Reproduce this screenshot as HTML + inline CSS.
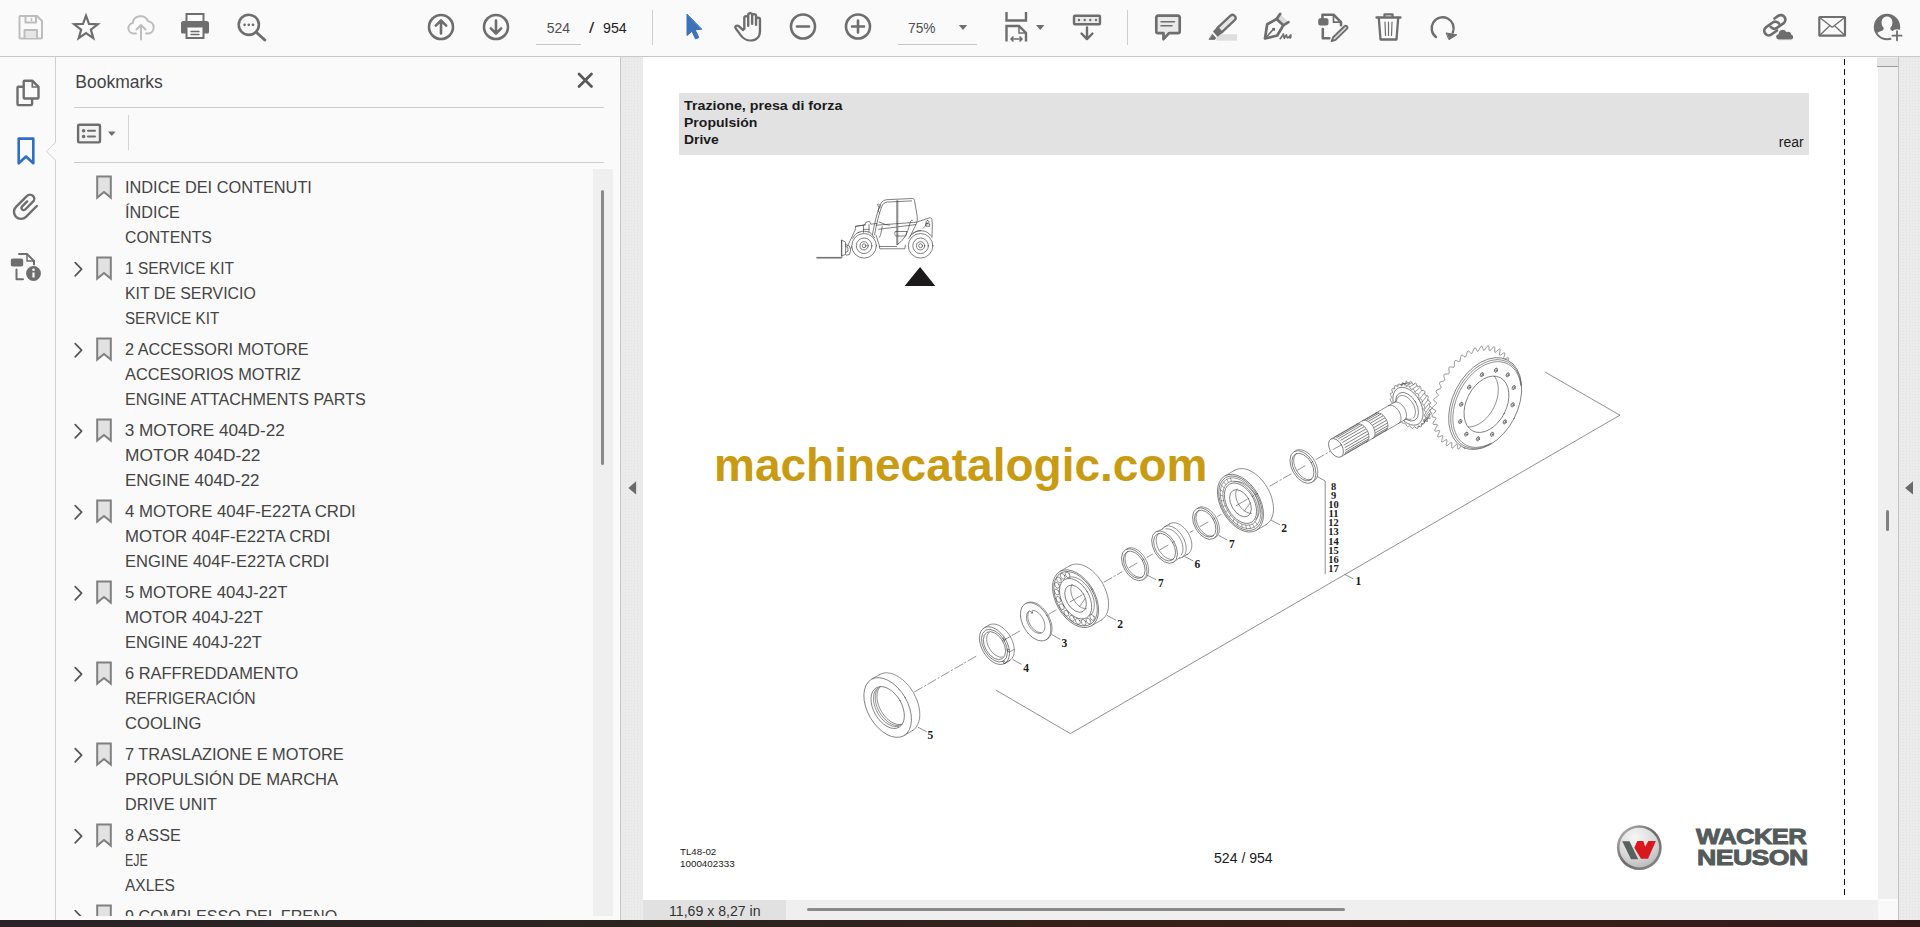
<!DOCTYPE html>
<html lang="en">
<head>
<meta charset="utf-8">
<title>Acrobat Reader</title>
<style>
html,body{margin:0;padding:0;}
body{width:1920px;height:927px;overflow:hidden;position:relative;background:#fafafa;font-family:"Liberation Sans",sans-serif;color:#3c3c3c;}
.abs{position:absolute;}
#toolbar{left:0;top:0;width:1920px;height:56px;background:#fafafa;border-bottom:1px solid #c9c9c9;}
#rail{left:0;top:57px;width:55px;height:863px;background:#fafafa;border-right:1px solid #d0d0d0;}
#panel{left:56px;top:57px;width:564px;height:863px;background:#fafafa;border-right:1px solid #c4c4c4;}
#gutterL{left:621px;top:57px;width:22px;height:863px;}
#page{left:643px;top:57px;width:1235px;height:843px;background:#fff;}
#vscroll{left:1878px;top:57px;width:20px;height:843px;background:#efefef;border-right:1px solid #c2c2c2;}
#gutterR{left:1899px;top:57px;width:21px;height:863px;}
#hscroll{left:643px;top:900px;width:1235px;height:20px;background:#efefef;}
#corner{left:1878px;top:899px;width:20px;height:21px;background:#f9f9f9;border-right:1px solid #c2c2c2;}
#taskbar{left:0;top:920px;width:1920px;height:7px;background:linear-gradient(90deg,#2b2228 0%,#2e241d 38%,#3a1f17 72%,#35191a 100%);}
.dots{background-color:#ebebeb;background-image:radial-gradient(circle,#e2e2e2 0.7px,transparent 1px);background-size:3px 3px;}
svg{position:absolute;overflow:visible;}
.tx{position:absolute;white-space:nowrap;transform-origin:0 0;line-height:1;}
</style>
</head>
<body>
<div id="toolbar" class="abs"></div>
<div id="rail" class="abs"></div>
<div id="panel" class="abs"></div>
<div id="gutterL" class="abs dots"></div>
<div id="page" class="abs"></div>
<div id="vscroll" class="abs"></div>
<div id="gutterR" class="abs dots"></div>
<div id="hscroll" class="abs"></div>
<div id="corner" class="abs"></div>
<div id="taskbar" class="abs"></div>
<svg class="abs" style="left:0;top:0" width="1920" height="56" viewBox="0 0 1920 56" fill="none" stroke-linecap="round" stroke-linejoin="round">
<!-- save (disabled) -->
<g stroke="#bdbdbd" stroke-width="2">
<path d="M20.5 16h16.5l5 5v16.5a1 1 0 0 1-1 1h-20.5a1 1 0 0 1-1-1v-20.500a1 1 0 0 1 1-1z"/>
<path d="M25.500 16v6.500h10.500v-6.500" />
<path d="M24.500 38v-8h12.500v8" fill="#e6e6e6"/>
<path d="M31.500 18.500v2" stroke-width="1.500"/>
</g>
<!-- star -->
<path d="M86.00 15.70L89.00 23.97L97.79 24.27L90.85 29.68L93.29 38.13L86.00 33.20L78.71 38.13L81.15 29.68L74.21 24.27L83.00 23.97z" stroke="#6e6e6e" stroke-width="2.200" stroke-linejoin="miter"/>
<!-- cloud upload (disabled) -->
<g stroke="#bdbdbd" stroke-width="2">
<path d="M136 33.500h-2.500a5.300 5.300 0 0 1-0.800-10.500a8 8 0 0 1 15.300-1.800a6.200 6.200 0 0 1 0.500 12.300h-2.500"/>
<path d="M141 39.500v-14M136.500 29.500l4.500-4.500 4.500 4.500"/>
</g>
<!-- printer -->
<g>
<path d="M186.500 21v-7h17v7" stroke="#6e6e6e" stroke-width="2" stroke-linejoin="miter"/>
<path d="M183.500 21h23a2.500 2.500 0 0 1 2.500 2.500v8.500a1.500 1.500 0 0 1-1.500 1.500h-3.500v-6h-18v6h-3.500a1.500 1.500 0 0 1-1.500-1.500v-8.500a2.500 2.500 0 0 1 2.500-2.500z" fill="#6e6e6e" stroke="none"/>
<path d="M186.500 28v10h17v-10" stroke="#6e6e6e" stroke-width="2" stroke-linejoin="miter"/>
<path d="M191 31.500h8M191 34.500h8" stroke="#6e6e6e" stroke-width="1.300"/>
</g>
<!-- search -->
<g stroke="#6e6e6e">
<circle cx="248.800" cy="24.800" r="10.100" stroke-width="2.600"/>
<path d="M256.500 32.500l8.300 7.500" stroke-width="3"/>
<path d="M244.600 24.800h0.010M248.800 24.800h0.010M253 24.800h0.010" stroke-width="2.700"/>
</g>
<!-- up / down -->
<g stroke="#6e6e6e" stroke-width="2.600">
<circle cx="441" cy="27" r="12"/>
<path d="M441 33.500v-12.500M435.800 25.700l5.200-5.200 5.200 5.200"/>
<circle cx="496" cy="27" r="12"/>
<path d="M496 20.500v12.500M490.800 28.300l5.200 5.200 5.200-5.200"/>
</g>
<!-- page num underline, separators -->
<path d="M536 44.500h45M898 44.500h79" stroke="#c6c6c6" stroke-width="1" stroke-linecap="butt"/>
<path d="M652.500 10v35M1127.500 10v35" stroke="#cfcfcf" stroke-width="1" stroke-linecap="butt"/>
<!-- select arrow (blue) -->
<path d="M687 14.500v21l5-4.200 3.600 7.700 3.200-1.500-3.600-7.600 6.300-0.700z" fill="#3b72b8" stroke="#3b72b8" stroke-width="1" stroke-linejoin="round"/>
<!-- hand -->
<g stroke="#6e6e6e" stroke-width="2.200" transform="translate(734.200 0) scale(1.087 1) translate(-734.200 0)">
<path d="M743.500 29v-11a1.800 1.800 0 0 1 3.600 0v8M747.100 24v-9a1.800 1.800 0 0 1 3.600 0v9M750.700 24v-8a1.800 1.800 0 0 1 3.600 0v9M754.300 25v-5.500a1.800 1.800 0 0 1 3.600 0v11.500c0 6-3.500 9.500-8.500 9.500s-7-2-9-5l-4.800-7.200c-1.200-2 1.200-3.600 2.800-2.200l4.100 4"/>
</g>
<!-- zoom out / in -->
<g stroke="#6e6e6e" stroke-width="2.600">
<circle cx="803" cy="26.500" r="12"/>
<path d="M797 26.500h12"/>
<circle cx="858" cy="26.500" r="12"/>
<path d="M852 26.500h12M858 20.500v12"/>
</g>
<!-- zoom dropdown arrows -->
<path d="M958.800 25h8.400l-4.200 5z M1036 25h8.400l-4.200 5z" fill="#6e6e6e" stroke="none"/>
<!-- fit width icon -->
<g stroke="#6e6e6e" stroke-width="2.400" stroke-linecap="butt" stroke-linejoin="miter">
<path d="M1006.500 12v8.500h19.500v-8.500"/>
<path d="M1006.500 41.500v-15.500h12.500l7 7v8.500"/>
<path d="M1019 26v7h7" stroke-width="1.500"/>
<path d="M1011 39h11M1013.500 36.500l-2.500 2.500 2.500 2.500M1019.500 36.500l2.500 2.500-2.500 2.500" stroke-width="1.500"/>
</g>
<!-- scroll mode icon -->
<g stroke="#6e6e6e" stroke-width="2.400">
<rect x="1074" y="15.700" width="26" height="8.600" rx="1" fill="#ececec"/>
<path d="M1079 20h0.010M1084.700 20h0.010M1090.300 20h0.010M1096 20h0.010" stroke-width="2.400"/>
<path d="M1087 27.500v11.500M1081.500 33.500l5.500 5.700 5.500-5.700"/>
</g>
<!-- comment -->
<g stroke="#6e6e6e" stroke-width="2.700">
<path d="M1158 15.700h20a1.700 1.700 0 0 1 1.700 1.700v14.100a1.700 1.700 0 0 1-1.700 1.700h-9l-5.500 6v-6h-5.500a1.700 1.700 0 0 1-1.700-1.700v-14.100a1.700 1.700 0 0 1 1.700-1.700z" fill="#e9e9e9"/>
<path d="M1161 21.800h13.500M1161 25.800h11" stroke-width="1.500"/>
</g>
<!-- highlighter -->
<g>
<rect x="1216.500" y="34.200" width="20.500" height="6.500" fill="#dedede" stroke="none"/>
<g transform="translate(0 -1.300)"><path d="M1230.500 17l-13 12.200 4.200 4.500 13-12.200a3.080 3.080 0 0 0-4.200-4.500z" fill="#e6e6e6" stroke="#6e6e6e" stroke-width="2.300" stroke-linejoin="round"/>
<path d="M1217.500 29.200l4.200 4.500-3.900 3.300-3.900-4.200z" fill="#6e6e6e" stroke="#6e6e6e" stroke-width="1.600" stroke-linejoin="round"/></g>
<path d="M1212.500 34.500l3.300 3.600-1 1.300h-5.500z" fill="#6e6e6e" stroke="#6e6e6e" stroke-width="0.800" stroke-linejoin="round"/>
</g>
<!-- sign pen -->
<g stroke="#6e6e6e" stroke-width="2.700" stroke-linejoin="round" stroke-linecap="round">
<path d="M1276.600 19l3.600-5.100 8.300 8.300-5.200 3.100z" fill="#dcdcdc" stroke="none"/>
<path d="M1265 38.500l2.200-14.200 9.400-5.300 6.700 6.300-6 10.200z" fill="#fafafa"/>
<path d="M1276.600 19l3.600-5.100M1283.300 25.300l5.200-3.100"/>
<path d="M1265.300 38.200l7.600-8.500" stroke-width="1.600"/>
<rect x="1272.200" y="27.900" width="2.800" height="2.800" fill="#6e6e6e" stroke="none"/>
<path d="M1280.200 38.600c1-1 2.300-2.800 3.100-4.600c0.500 1.600 0.700 3 1 4.400c0.800-1.500 1.400-2.700 2.100-3.500c0.300 1.200 0.500 2.200 1 3c1-0.300 2.200-1.400 3.400-2.900c0.200 1.300 0.100 2.200-0.600 3.100" stroke-width="1.700" fill="none"/>
</g>
<!-- edit pdf -->
<g stroke="#6e6e6e" stroke-width="2.600">
<path d="M1322.500 19v-4.300h11l7.500 7.500v3"/>
<path d="M1333.500 15.500v6.700h6.700" stroke-width="1.700"/>
<rect x="1319.200" y="19.200" width="8.300" height="5.400" rx="1" fill="#6e6e6e" stroke-width="2"/>
<path d="M1322.800 29v9.200h6.500"/>
<path d="M1344.500 26.300l-11.300 11-1.600 3.800 3.900-1.200 11.300-11a1.650 1.650 0 0 0-2.300-2.600z" fill="#dcdcdc" stroke-width="1.900"/>
</g>
<!-- trash -->
<g stroke="#6e6e6e" stroke-width="2.300">
<path d="M1376.500 17.500h24"/>
<path d="M1384.500 17v-2.700h8v2.700"/>
<path d="M1378.800 18l1.700 21.500h16l1.700-21.500"/>
<path d="M1385 22l0.500 13.500M1388.500 22v13.500M1392 22l-0.500 13.500" stroke-width="1.200"/>
</g>
<!-- rotate -->
<g>
<path d="M1436 37a11 11 0 1 1 16.800-4.500" stroke="#6e6e6e" stroke-width="2.400"/>
<path d="M1446.500 33l10.300 1.800-7.500 4.700z" fill="#6e6e6e" stroke="#6e6e6e" stroke-width="1"/>
</g>
<!-- link + cloud -->
<g>
<g stroke="#6e6e6e" stroke-width="2.700">
<path d="M1774.500 18.500l3.700-2.600a4.500 4.500 0 0 1 5.200 7.400l-6.500 4.600a4.500 4.500 0 0 1-6.300-1.100"/>
<path d="M1777 30.500l-5.600 4a4.500 4.500 0 0 1-5.200-7.400l6.500-4.600a4.500 4.500 0 0 1 6.300 1.100"/>
</g>
<path d="M1778.500 40.200a3.300 3.300 0 0 1-0.400-6.500a4.600 4.600 0 0 1 8.600-2.200a3.400 3.400 0 0 1 5 2.700a3.100 3.100 0 0 1-0.700 6z" fill="#6e6e6e" stroke="#fafafa" stroke-width="1.200"/>
</g>
<!-- mail -->
<g stroke="#6e6e6e">
<rect x="1819.300" y="17" width="25.700" height="18.700" rx="0.500" stroke-width="2.200"/>
<path d="M1820 17.700l12.200 9.600 12.200-9.600M1820 35l9.500-9M1844.400 35l-9.500-9" stroke-width="1.300"/>
</g>
<!-- user + -->
<g>
<clipPath id="ucl"><circle cx="1887" cy="27" r="11.200"/></clipPath>
<circle cx="1887" cy="27" r="13.200" fill="#6e6e6e" stroke="none"/>
<g clip-path="url(#ucl)">
<path d="M1887 16.600c3.300 0 5.400 2.500 5.400 5.900c0 2.400-0.900 4.400-2.200 5.600c0 1.600 0.600 2.200 2.500 3c3.600 1.300 6.300 2.500 6.800 5.400v6h-25v-6c0.500-2.900 3.200-4.100 6.800-5.400c1.900-0.800 2.500-1.400 2.500-3c-1.300-1.200-2.200-3.200-2.200-5.600c0-3.400 2.100-5.900 5.400-5.900z" fill="#fafafa" stroke="none"/>
</g>
<circle cx="1897" cy="35.800" r="6.600" fill="#fafafa" stroke="none"/>
<path d="M1892.400 35.700h9.200M1897 31.100v9.200" stroke="#6e6e6e" stroke-width="1.800"/>
</g>
</svg>

<svg class="abs" style="left:0;top:57px" width="640" height="120" viewBox="0 57 640 120" fill="none" stroke-linecap="round" stroke-linejoin="round">
<!-- notch pointing to active item -->
<path d="M55.500 143.200v16.600" stroke="#fafafa" stroke-width="1.800" stroke-linecap="butt"/>
<path d="M55.600 142.300l-9 9 9 9" fill="#fafafa" stroke="#d0d0d0" stroke-width="1" stroke-linecap="butt"/>
<!-- pages icon -->
<g stroke="#6e6e6e" stroke-width="2.400">
<path d="M22.300 86.700h-3.800a1 1 0 0 0-1 1v16.400a1 1 0 0 0 1 1h12.600a1 1 0 0 0 1-1v-4.300"/>
<path d="M24.700 80.800h7.800l6 6v10.700a1 1 0 0 1-1 1h-12.800a1 1 0 0 1-1-1v-15.700a1 1 0 0 1 1-1z" fill="#fafafa"/>
<path d="M32.300 81.500v5.500h5.500" stroke-width="1.700"/>
</g>
<!-- bookmark (active, blue) -->
<path d="M18.700 138.600h14.600v24.700l-7.300-6.800-7.300 6.800z" stroke="#2d6fc8" stroke-width="2.600" stroke-linejoin="round"/>
<!-- options icon -->
<g stroke="#6e6e6e">
<rect x="78.100" y="124.700" width="21.900" height="17.700" rx="1.200" stroke-width="2.400" fill="#f2f2f2"/>
<path d="M83.600 130.800h0.010M83.600 136.500h0.010" stroke-width="3.600"/>
<path d="M88 130.800h7M88 136.500h7" stroke-width="2.100" stroke-linecap="round"/>
</g>
<path d="M108 131.500h7.600l-3.800 4.500z" fill="#6e6e6e" stroke="none"/>
<path d="M128.500 115v35" stroke="#d4d4d4" stroke-width="1" stroke-linecap="butt"/>
<!-- header dividers -->
<path d="M74 107.500h530M74 162.500h530" stroke="#cdcdcd" stroke-width="1" stroke-linecap="butt"/>
<!-- close X -->
<path d="M579 74l12.500 12.500M591.500 74l-12.500 12.500" stroke="#5a5a5a" stroke-width="2.800"/>
</svg>
<svg class="abs" style="left:0;top:180px" width="56" height="120" viewBox="0 180 56 120" fill="none" stroke-linecap="round" stroke-linejoin="round">
<!-- paperclip -->
<path d="M36.830 205.980L25.980 216.830A7.040 7.040 0 0 1 16.020 206.870L27.090 195.800A4.170 4.170 0 0 1 32.990 201.700L25.210 209.480A2.145 2.145 0 0 1 22.180 206.440L27.170 201.450" stroke="#6e6e6e" stroke-width="2.400"/>
<!-- doc info -->
<g stroke="#6e6e6e" stroke-width="2">
<path d="M19 254h8l7 7v3.500"/>
<path d="M27 254v7h7" stroke-width="1.500"/>
<rect x="11.800" y="259.500" width="10.400" height="6" rx="1" fill="#6e6e6e"/>
<path d="M16.500 269.500v9.700h6.500"/>
</g>
<circle cx="33.500" cy="273.500" r="7.400" fill="#6e6e6e"/>
<path d="M33.500 272.500v5" stroke="#fafafa" stroke-width="2.200" stroke-linecap="butt"/>
<circle cx="33.500" cy="269.700" r="1.300" fill="#fafafa"/>
</svg>

<div class="abs" style="left:56px;top:170px;width:537px;height:746px;overflow:hidden"><div class="abs" style="left:-56px;top:-170px;width:600px;height:927px"><div class="tx" style="left:124.70px;top:179.04px;font-size:17.2px;color:#444;transform:scaleX(0.9501);">INDICE DEI CONTENUTI</div>
<div class="tx" style="left:124.70px;top:204.04px;font-size:17.2px;color:#444;transform:scaleX(0.9422);">ÍNDICE</div>
<div class="tx" style="left:124.70px;top:229.04px;font-size:17.2px;color:#444;transform:scaleX(0.9182);">CONTENTS</div>
<div class="tx" style="left:124.70px;top:260.04px;font-size:17.2px;color:#444;transform:scaleX(0.9000);">1 SERVICE KIT</div>
<div class="tx" style="left:124.70px;top:285.04px;font-size:17.2px;color:#444;transform:scaleX(0.9232);">KIT DE SERVICIO</div>
<div class="tx" style="left:124.70px;top:310.04px;font-size:17.2px;color:#444;transform:scaleX(0.8831);">SERVICE KIT</div>
<div class="tx" style="left:124.70px;top:341.04px;font-size:17.2px;color:#444;transform:scaleX(0.9433);">2 ACCESSORI MOTORE</div>
<div class="tx" style="left:124.70px;top:366.04px;font-size:17.2px;color:#444;transform:scaleX(0.9489);">ACCESORIOS MOTRIZ</div>
<div class="tx" style="left:124.70px;top:391.04px;font-size:17.2px;color:#444;transform:scaleX(0.9381);">ENGINE ATTACHMENTS PARTS</div>
<div class="tx" style="left:124.70px;top:422.04px;font-size:17.2px;color:#444;">3 MOTORE 404D-22</div>
<div class="tx" style="left:124.70px;top:447.04px;font-size:17.2px;color:#444;transform:scaleX(1.0084);">MOTOR 404D-22</div>
<div class="tx" style="left:124.70px;top:472.04px;font-size:17.2px;color:#444;transform:scaleX(0.9846);">ENGINE 404D-22</div>
<div class="tx" style="left:124.70px;top:503.04px;font-size:17.2px;color:#444;transform:scaleX(0.9766);">4 MOTORE 404F-E22TA CRDI</div>
<div class="tx" style="left:124.70px;top:528.04px;font-size:17.2px;color:#444;transform:scaleX(0.9756);">MOTOR 404F-E22TA CRDI</div>
<div class="tx" style="left:124.70px;top:553.04px;font-size:17.2px;color:#444;transform:scaleX(0.9610);">ENGINE 404F-E22TA CRDI</div>
<div class="tx" style="left:124.70px;top:584.04px;font-size:17.2px;color:#444;transform:scaleX(0.9740);">5 MOTORE 404J-22T</div>
<div class="tx" style="left:124.70px;top:609.04px;font-size:17.2px;color:#444;transform:scaleX(0.9784);">MOTOR 404J-22T</div>
<div class="tx" style="left:124.70px;top:634.04px;font-size:17.2px;color:#444;transform:scaleX(0.9554);">ENGINE 404J-22T</div>
<div class="tx" style="left:124.70px;top:665.04px;font-size:17.2px;color:#444;transform:scaleX(0.9562);">6 RAFFREDDAMENTO</div>
<div class="tx" style="left:124.70px;top:690.04px;font-size:17.2px;color:#444;transform:scaleX(0.9124);">REFRIGERACIÓN</div>
<div class="tx" style="left:124.70px;top:715.04px;font-size:17.2px;color:#444;transform:scaleX(0.9651);">COOLING</div>
<div class="tx" style="left:124.70px;top:746.04px;font-size:17.2px;color:#444;transform:scaleX(0.9527);">7 TRASLAZIONE E MOTORE</div>
<div class="tx" style="left:124.70px;top:771.04px;font-size:17.2px;color:#444;transform:scaleX(0.9664);">PROPULSIÓN DE MARCHA</div>
<div class="tx" style="left:124.70px;top:796.04px;font-size:17.2px;color:#444;transform:scaleX(0.9424);">DRIVE UNIT</div>
<div class="tx" style="left:124.70px;top:827.04px;font-size:17.2px;color:#444;transform:scaleX(0.9401);">8 ASSE</div>
<div class="tx" style="left:124.70px;top:852.04px;font-size:17.2px;color:#444;transform:scaleX(0.7263);">EJE</div>
<div class="tx" style="left:124.70px;top:877.04px;font-size:17.2px;color:#444;transform:scaleX(0.9004);">AXLES</div>
<div class="tx" style="left:124.70px;top:908.04px;font-size:17.2px;color:#444;transform:scaleX(0.9409);">9 COMPLESSO DEL FRENO</div>
<svg class="abs" style="left:56px;top:170px" width="540" height="746" viewBox="56 170 540 746" fill="none">
<path d="M97.200 176.6h13.600v21l-6.800-5.600-6.800 5.600z" fill="#e2e2e2" stroke="#808080" stroke-width="2" stroke-linejoin="miter"/>
<path d="M97.200 257.6h13.600v21l-6.800-5.600-6.800 5.600z" fill="#e2e2e2" stroke="#808080" stroke-width="2" stroke-linejoin="miter"/>
<path d="M75.200 262.6l6.400 6.600-6.400 6.600" stroke="#555" stroke-width="1.700" stroke-linecap="round" stroke-linejoin="round"/>
<path d="M97.200 338.6h13.600v21l-6.800-5.600-6.800 5.600z" fill="#e2e2e2" stroke="#808080" stroke-width="2" stroke-linejoin="miter"/>
<path d="M75.200 343.6l6.400 6.600-6.400 6.600" stroke="#555" stroke-width="1.700" stroke-linecap="round" stroke-linejoin="round"/>
<path d="M97.200 419.6h13.600v21l-6.800-5.600-6.800 5.600z" fill="#e2e2e2" stroke="#808080" stroke-width="2" stroke-linejoin="miter"/>
<path d="M75.200 424.6l6.400 6.600-6.400 6.600" stroke="#555" stroke-width="1.700" stroke-linecap="round" stroke-linejoin="round"/>
<path d="M97.200 500.6h13.600v21l-6.800-5.600-6.800 5.600z" fill="#e2e2e2" stroke="#808080" stroke-width="2" stroke-linejoin="miter"/>
<path d="M75.200 505.6l6.400 6.600-6.400 6.600" stroke="#555" stroke-width="1.700" stroke-linecap="round" stroke-linejoin="round"/>
<path d="M97.200 581.6h13.600v21l-6.800-5.600-6.800 5.600z" fill="#e2e2e2" stroke="#808080" stroke-width="2" stroke-linejoin="miter"/>
<path d="M75.200 586.6l6.400 6.600-6.400 6.600" stroke="#555" stroke-width="1.700" stroke-linecap="round" stroke-linejoin="round"/>
<path d="M97.200 662.6h13.600v21l-6.800-5.600-6.800 5.600z" fill="#e2e2e2" stroke="#808080" stroke-width="2" stroke-linejoin="miter"/>
<path d="M75.200 667.6l6.400 6.600-6.400 6.600" stroke="#555" stroke-width="1.700" stroke-linecap="round" stroke-linejoin="round"/>
<path d="M97.200 743.6h13.600v21l-6.800-5.600-6.800 5.600z" fill="#e2e2e2" stroke="#808080" stroke-width="2" stroke-linejoin="miter"/>
<path d="M75.200 748.6l6.400 6.600-6.400 6.600" stroke="#555" stroke-width="1.700" stroke-linecap="round" stroke-linejoin="round"/>
<path d="M97.200 824.6h13.600v21l-6.800-5.600-6.800 5.600z" fill="#e2e2e2" stroke="#808080" stroke-width="2" stroke-linejoin="miter"/>
<path d="M75.200 829.6l6.400 6.600-6.400 6.600" stroke="#555" stroke-width="1.700" stroke-linecap="round" stroke-linejoin="round"/>
<path d="M97.200 905.6h13.600v21l-6.800-5.600-6.800 5.600z" fill="#e2e2e2" stroke="#808080" stroke-width="2" stroke-linejoin="miter"/>
<path d="M75.200 910.6l6.400 6.600-6.400 6.600" stroke="#555" stroke-width="1.700" stroke-linecap="round" stroke-linejoin="round"/>
</svg></div></div>
<div class="abs" style="left:593px;top:169px;width:20px;height:747px;background:#efefef"></div>
<div class="abs" style="left:601px;top:190px;width:3px;height:275px;background:#8a8a8a;border-radius:1.500px"></div>
<div class="abs" style="left:679px;top:93px;width:1130px;height:61.500px;background:#e2e2e2"></div>
<svg class="abs" style="left:643px;top:57px" width="1235" height="843" viewBox="643 57 1235 843" fill="none">
<path d="M1844.500 59v836" stroke="#111" stroke-width="1" stroke-dasharray="6 4"/>
<!-- triangle marker -->
<path d="M920.100 267l15.200 18.900h-30.700z" fill="#1c1a1b"/>
<!-- telehandler pictogram -->
<g stroke="#3a3a3a" stroke-width="0.650" stroke-linecap="round" stroke-linejoin="round">
<path d="M816.800 257.400h24.200l0.800-0.600v-16.600M816.800 258.100h24.600l1-0.800"/>
<path d="M841.800 240.200l3.800 2v12.400l-3.800 1z"/>
<path d="M845.600 244.500l3.800 1.500 1.200 3.800-1 4.700-3.200 0.600M845.600 246.300l2.300 1.500v3.500l-2.300 1"/>
<path d="M847.300 246.400l7.900-16.400 0.500-3.800 10-1.400M850.800 248.500l3.200-6.300"/>
<path d="M855.700 226.400l8.800-1.300 1.600-3 3.400-0.700 1.300 2.800 6.200-0.800"/>
<path d="M863.400 225.300v7.100M869 224.500v7.500M863.400 229.300h5.600"/>
<path d="M858 232.700c3.500-2 9.500-2 13 0.600l3.600 4.600M852.600 238.400c1.700-3.500 4-5.300 6.600-6.400"/>
<circle cx="864.100" cy="245.800" r="12.300" fill="#fff"/>
<circle cx="864.100" cy="245.800" r="7.800"/>
<circle cx="864.100" cy="245.800" r="4.100"/>
<circle cx="864.100" cy="245.800" r="1.900"/>
<path d="M872.500 234.400c1.800-10 5-24 8.200-30.500 1.300-2.500 3-3.800 6-4.200l25.600-1.200c1.300 0 1.900 0.700 2.200 2l2.600 15c0.500 3.500 0.200 6.500-1.200 9.300l-5.800 11.600"/>
<path d="M874.600 234.800c1.600-9.500 4.600-22.500 7.600-29 1-2.300 2.300-3.300 4.800-3.700l24.600-1.200"/>
<path d="M896.800 200.700v44M897.800 200.700v44"/>
<path d="M876.300 225.200l40.300-3 12.600-4.300c1.700-0.500 2.600 0.300 2.800 1.800l0.300 4.800-0.300 12.800"/>
<path d="M878.600 229.300l17.800-2.200M898.200 226.800l17.600-2.200"/>
<path d="M879 222l6.500 2.500 3.800 0.600M882.200 226.500l-1.500 8 -1.200 2.700"/>
<path d="M876 235.200l3.200 9.800 0.600 3.800h25l0.500-3.600M879.600 246.500h17.200"/>
<path d="M897.500 244.200c5-2.800 9-8.500 11.200-16.500l1.800-6.200c0.500-1.200 1.300-1.600 2-1.200"/>
<path d="M895.500 231.500h11.500l-1.300 4.500h-9.200c-1.300 0-1.700-0.700-1.700-2.200z"/>
<path d="M908.800 238.500c2.500-5.300 7-7.800 12-7.800 4.600 0 8.300 2 10.600 5.500M912.600 233.800c2.600-2.200 5.400-3.100 8.200-3.100"/>
<path d="M923.200 228.200l2.200-2.200 0.300-2.700 1.800-0.300M926.500 226.200h3.200v-2.400h-3.200zM927.500 220.400a1.500 1.500 0 1 0 0.010 0"/>
<path d="M877.500 204.500l1.500 3-0.800 3.600 1.500 1.800M878.500 203.800l1.800 1.800-0.500 2.300"/>
<circle cx="920.600" cy="245.800" r="12.300" fill="#fff"/>
<circle cx="920.600" cy="245.800" r="7.800"/>
<circle cx="920.600" cy="245.800" r="4.100"/>
<circle cx="920.600" cy="245.800" r="1.900"/>
</g>
<!-- WACKER NEUSON emblem -->
<defs>
<radialGradient id="wg" cx="0.400" cy="0.250" r="0.800"><stop offset="0" stop-color="#f6f6f6"/><stop offset="0.600" stop-color="#d9d9d9"/><stop offset="1" stop-color="#b4b4b4"/></radialGradient>
<linearGradient id="wr" x1="0" y1="0" x2="1" y2="1"><stop offset="0" stop-color="#b8b8b8"/><stop offset="0.500" stop-color="#6a6a6a"/><stop offset="1" stop-color="#8a8a8a"/></linearGradient>
</defs>
<circle cx="1639.300" cy="847.600" r="21.100" fill="url(#wg)" stroke="url(#wr)" stroke-width="2.600"/>
<path d="M1622.200 841.200h7.300l8.700 18.100h-7.200z" fill="#596060"/>
<path d="M1637.300 841h6.100l1.800 5.700 3.100-5.700h7.600l-7.800 17.700h-7.100l-6.700-10.900z" fill="#d8181c"/>
</svg>

<div class="tx" style="left:684.00px;top:99.41px;font-size:13.1px;color:#1a1a1a;font-weight:bold;transform:scaleX(1.0884);">Trazione, presa di forza</div>
<div class="tx" style="left:684.00px;top:116.01px;font-size:13.1px;color:#1a1a1a;font-weight:bold;transform:scaleX(1.0718);">Propulsión</div>
<div class="tx" style="left:684.00px;top:132.61px;font-size:13.1px;color:#1a1a1a;font-weight:bold;transform:scaleX(1.0606);">Drive</div>
<div class="tx" style="left:1778.80px;top:134.95px;font-size:14px;color:#1a1a1a;">rear</div>
<div class="tx" style="left:679.90px;top:847.93px;font-size:9.3px;color:#1a1a1a;transform:scaleX(1.0450);">TL48-02</div>
<div class="tx" style="left:680.20px;top:860.03px;font-size:9.3px;color:#1a1a1a;transform:scaleX(1.0557);">1000402333</div>
<div class="tx" style="left:1214.10px;top:851.15px;font-size:14px;color:#1a1a1a;transform:scaleX(1.0053);">524 / 954</div>
<div class="tx" style="left:713.60px;top:442.65px;font-size:45.3px;color:#c99b13;font-weight:bold;transform:scaleX(1.0155);">machinecatalogic.com</div>
<div class="tx" style="left:1695.80px;top:826.33px;font-size:21.7px;color:#535b5b;font-weight:bold;-webkit-text-stroke:0.9px #535b5b;letter-spacing:-0.5px;transform:scaleX(1.1800);">WACKER</div>
<div class="tx" style="left:1697.30px;top:846.73px;font-size:21.7px;color:#535b5b;font-weight:bold;-webkit-text-stroke:0.9px #535b5b;letter-spacing:-0.5px;transform:scaleX(1.2317);">NEUSON</div>
<svg class="abs" style="left:643px;top:57px" width="1235" height="843" viewBox="643 57 1235 843" fill="none" stroke="#4a4a4a" stroke-width="0.620" stroke-linecap="round" stroke-linejoin="round">
<path d="M912.2 730.8 L914.3 729.3 L916.2 727.2 L917.6 724.8 L918.7 722.0 L919.5 718.9 L919.8 715.4 L919.7 711.8 L919.2 708.0 L918.3 704.1 L917.0 700.2 L915.3 696.4 L913.4 692.6 L911.1 689.0 L908.6 685.7 L905.8 682.6 L902.9 679.9 L899.8 677.6 L896.7 675.7 L893.6 674.2 L890.5 673.3 L887.5 672.8 L884.7 672.9 L882.1 673.5 L879.6 674.6"/>
<path d="M904.0 735.6L912.2 730.8"/>
<path d="M871.4 679.3L879.6 674.6"/>
<ellipse cx="887.7" cy="707.5" rx="20.1" ry="32.5" transform="rotate(-30.07 887.7 707.5)" fill="#fff"/>
<ellipse cx="887.7" cy="707.5" rx="14.1" ry="22.8" transform="rotate(-30.07 887.7 707.5)"/>
<path d="M898.6 726.2 L896.7 726.6 L894.6 726.5 L892.3 726.0 L890.1 725.1 L887.8 723.9 L885.5 722.3 L883.4 720.4 L881.3 718.2 L879.5 715.8 L877.8 713.2 L876.4 710.4 L875.2 707.6 L874.3 704.7 L873.7 701.9 L873.5 699.2 L873.5 696.6 L873.9 694.2 L874.6 692.0 L875.6 690.2 L876.9 688.6"/>
<path d="M900.4 725.2 L898.4 725.6 L896.3 725.5 L894.1 725.0 L891.8 724.1 L889.5 722.9 L887.3 721.3 L885.1 719.4 L883.1 717.2 L881.2 714.8 L879.5 712.2 L878.1 709.4 L876.9 706.6 L876.0 703.7 L875.5 700.9 L875.2 698.2 L875.3 695.6 L875.6 693.2 L876.3 691.0 L877.3 689.2 L878.6 687.6"/>
<path d="M902.1 724.2 L900.1 724.6 L898.0 724.5 L895.8 724.0 L893.5 723.1 L891.2 721.9 L889.0 720.3 L886.8 718.4 L884.8 716.2 L882.9 713.8 L881.3 711.2 L879.8 708.4 L878.7 705.6 L877.8 702.7 L877.2 699.9 L876.9 697.2 L877.0 694.6 L877.4 692.2 L878.1 690.0 L879.1 688.2 L880.3 686.6"/>
<path d="M1009.5 660.6 L1010.9 659.6 L1012.0 658.3 L1013.0 656.8 L1013.7 655.0 L1014.1 653.1 L1014.3 650.9 L1014.2 648.6 L1013.9 646.2 L1013.4 643.8 L1012.5 641.3 L1011.5 638.9 L1010.3 636.5 L1008.8 634.2 L1007.2 632.1 L1005.5 630.2 L1003.6 628.5 L1001.7 627.0 L999.8 625.8 L997.8 624.9 L995.9 624.3 L994.0 624.0 L992.2 624.1 L990.5 624.4 L989.0 625.1"/>
<path d="M1004.8 663.4L1009.5 660.6"/>
<path d="M984.2 627.9L989.0 625.1"/>
<ellipse cx="994.5" cy="645.6" rx="12.7" ry="20.5" transform="rotate(-30.07 994.5 645.6)" fill="#fff"/>
<ellipse cx="994.5" cy="645.6" rx="11.0" ry="17.8" transform="rotate(-30.07 994.5 645.6)"/>
<ellipse cx="994.5" cy="645.6" rx="9.4" ry="15.2" transform="rotate(-30.07 994.5 645.6)"/>
<path d="M1002.9 656.9 L1001.3 657.2 L999.6 657.0 L997.8 656.4 L995.9 655.4 L994.1 654.1 L992.4 652.5 L990.8 650.6 L989.5 648.5 L988.3 646.3 L987.5 644.0 L986.9 641.7 L986.7 639.5 L986.8 637.4 L987.2 635.5 L987.9 633.9 L988.9 632.7"/>
<path d="M1009.5 652.0L1007.5 651.2"/>
<path d="M1014.3 649.3L1009.5 652.0"/>
<path d="M1009.3 649.8L1007.4 649.3"/>
<path d="M1007.5 651.2L1007.4 649.3"/>
<path d="M1005.5 639.2L1004.1 640.1"/>
<path d="M1010.3 636.5L1005.5 639.2"/>
<path d="M1004.2 637.2L1002.9 638.3"/>
<path d="M1004.1 640.1L1002.9 638.3"/>
<path d="M1004.1 663.7L1002.8 661.3"/>
<path d="M1008.8 661.0L1004.1 663.7"/>
<path d="M1005.4 663.0L1003.9 660.7"/>
<path d="M1002.8 661.3L1003.9 660.7"/>
<path d="M1046.0 639.7 L1047.6 638.9 L1049.0 637.7 L1050.1 636.2 L1051.0 634.5 L1051.6 632.4 L1052.0 630.2 L1052.0 627.7 L1051.7 625.2 L1051.2 622.6 L1050.3 619.9 L1049.2 617.3 L1047.9 614.7 L1046.3 612.3 L1044.6 610.0 L1042.7 608.0 L1040.7 606.2 L1038.6 604.7 L1036.5 603.5 L1034.4 602.6 L1032.3 602.2 L1030.3 602.0 L1028.5 602.3 L1026.8 602.9 L1025.3 603.9"/>
<ellipse cx="1035.7" cy="621.8" rx="12.9" ry="20.8" transform="rotate(-30.07 1035.7 621.8)" fill="#fff"/>
<path d="M1029.0 611.1 L1028.1 611.9 L1027.4 612.9 L1026.9 614.0 L1026.6 615.4 L1026.5 616.8 L1026.5 618.4 L1026.7 620.0 L1027.2 621.7 L1027.8 623.4 L1028.6 625.0 L1029.5 626.6 L1030.5 628.0 L1031.7 629.4 L1032.9 630.5 L1034.2 631.5 L1035.6 632.3 L1036.9 632.9 L1038.2 633.2 L1039.5 633.3 L1040.6 633.2 L1041.7 632.8 L1042.7 632.2 L1043.5 631.4 L1044.1 630.3 L1044.6 629.1 L1044.9 627.8 L1044.9 626.3 L1044.8 624.7 L1044.6 623.1 L1044.1 621.4 L1043.4 619.7 L1042.6 618.1 L1041.6 616.6 L1040.6 615.1 L1039.4 613.8 L1038.1 612.7 L1036.8 611.7 L1035.5 611.0 L1034.1 610.5 L1032.8 610.2 L1031.5 613.3 L1032.5 613.0Z"/>
<path d="M1040.9 632.6 L1039.4 632.5 L1037.7 632.0 L1036.1 631.1 L1034.4 630.0 L1032.9 628.5 L1031.5 626.8 L1030.2 624.9 L1029.2 622.9 L1028.5 620.8 L1028.0 618.8 L1027.8 616.8 L1027.8 614.9 L1028.2 613.3 L1028.9 611.8"/>
<path d="M1101.3 620.1 L1103.3 618.6 L1105.1 616.6 L1106.5 614.3 L1107.6 611.6 L1108.3 608.5 L1108.6 605.2 L1108.5 601.7 L1108.0 598.0 L1107.1 594.3 L1105.9 590.5 L1104.3 586.8 L1102.4 583.1 L1100.2 579.7 L1097.8 576.4 L1095.1 573.5 L1092.3 570.9 L1089.3 568.6 L1086.3 566.8 L1083.3 565.4 L1080.4 564.5 L1077.5 564.1 L1074.7 564.1 L1072.2 564.7 L1069.8 565.7"/>
<path d="M1091.3 625.8L1101.3 620.1"/>
<path d="M1059.9 571.5L1069.8 565.7"/>
<ellipse cx="1075.6" cy="598.7" rx="19.5" ry="31.4" transform="rotate(-30.07 1075.6 598.7)" fill="#fff"/>
<ellipse cx="1075.6" cy="598.7" rx="18.4" ry="29.6" transform="rotate(-30.07 1075.6 598.7)"/>
<ellipse cx="1075.6" cy="598.7" rx="13.6" ry="22.0" transform="rotate(-30.07 1075.6 598.7)"/>
<ellipse cx="1088.5" cy="621.0" rx="2.0" ry="3.200" transform="rotate(-30.1 1088.5 621.0)" stroke-width="0.550"/>
<ellipse cx="1092.2" cy="617.4" rx="2.0" ry="3.200" transform="rotate(-30.1 1092.2 617.4)" stroke-width="0.550"/>
<ellipse cx="1067.6" cy="574.9" rx="2.0" ry="3.200" transform="rotate(-30.1 1067.6 574.9)" stroke-width="0.550"/>
<ellipse cx="1062.7" cy="576.3" rx="2.0" ry="3.200" transform="rotate(-30.1 1062.7 576.3)" stroke-width="0.550"/>
<ellipse cx="1059.0" cy="579.9" rx="2.0" ry="3.200" transform="rotate(-30.1 1059.0 579.9)" stroke-width="0.550"/>
<ellipse cx="1057.0" cy="585.3" rx="2.0" ry="3.200" transform="rotate(-30.1 1057.0 585.3)" stroke-width="0.550"/>
<ellipse cx="1056.8" cy="592.0" rx="2.0" ry="3.200" transform="rotate(-30.1 1056.8 592.0)" stroke-width="0.550"/>
<ellipse cx="1058.4" cy="599.4" rx="2.0" ry="3.200" transform="rotate(-30.1 1058.4 599.4)" stroke-width="0.550"/>
<ellipse cx="1061.8" cy="606.7" rx="2.0" ry="3.200" transform="rotate(-30.1 1061.8 606.7)" stroke-width="0.550"/>
<ellipse cx="1066.4" cy="613.2" rx="2.0" ry="3.200" transform="rotate(-30.1 1066.4 613.2)" stroke-width="0.550"/>
<ellipse cx="1072.0" cy="618.3" rx="2.0" ry="3.200" transform="rotate(-30.1 1072.0 618.3)" stroke-width="0.550"/>
<ellipse cx="1077.9" cy="621.4" rx="2.0" ry="3.200" transform="rotate(-30.1 1077.9 621.4)" stroke-width="0.550"/>
<ellipse cx="1083.6" cy="622.4" rx="2.0" ry="3.200" transform="rotate(-30.1 1083.6 622.4)" stroke-width="0.550"/>
<path d="M1090.9 614.9 L1092.5 612.9 L1093.6 610.4 L1094.2 607.5 L1094.3 604.3 L1094.0 600.9 L1093.1 597.3 L1091.8 593.8 L1090.0 590.3 L1087.9 587.1 L1085.5 584.2 L1082.8 581.6 L1080.0 579.6 L1077.2 578.1 L1074.3 577.2 L1071.6 576.9 L1069.2 577.3"/>
<ellipse cx="1075.6" cy="598.7" rx="9.2" ry="14.8" transform="rotate(-30.07 1075.6 598.7)"/>
<path d="M1086.3 608.8 L1084.7 608.7 L1083.0 608.2 L1081.3 607.5 L1079.6 606.4 L1077.9 605.1 L1076.4 603.5 L1075.0 601.7 L1073.7 599.8 L1072.7 597.7 L1071.8 595.6 L1071.2 593.4 L1070.9 591.3 L1070.8 589.3 L1071.0 587.5 L1071.4 585.8 L1072.2 584.4"/>
<path d="M1085.4 598.2L1079.6 606.4"/>
<path d="M1143.1 579.5 L1144.5 578.9 L1145.8 578.0 L1146.8 576.7 L1147.6 575.3 L1148.2 573.6 L1148.6 571.7 L1148.6 569.6 L1148.4 567.4 L1148.0 565.1 L1147.3 562.8 L1146.3 560.6 L1145.2 558.4 L1143.9 556.3 L1142.3 554.3 L1140.7 552.6 L1139.0 551.1 L1137.2 549.8 L1135.3 548.8 L1133.5 548.2 L1131.7 547.8 L1130.1 547.8 L1128.5 548.1 L1127.1 548.7 L1125.8 549.7"/>
<ellipse cx="1134.3" cy="564.7" rx="10.8" ry="17.4" transform="rotate(-30.07 1134.3 564.7)" fill="#fff"/>
<ellipse cx="1134.3" cy="564.7" rx="9.2" ry="14.8" transform="rotate(-30.07 1134.3 564.7)"/>
<path d="M1142.8 576.8 L1141.1 577.3 L1139.2 577.3 L1137.2 576.8 L1135.1 575.9 L1133.1 574.5 L1131.2 572.8 L1129.4 570.7 L1127.9 568.4 L1126.7 565.9 L1125.7 563.3 L1125.2 560.8 L1125.0 558.4 L1125.2 556.1 L1125.8 554.1 L1126.7 552.5 L1128.0 551.3"/>
<path d="M1186.7 554.6 L1188.1 553.9 L1189.2 552.9 L1190.2 551.6 L1191.0 550.1 L1191.5 548.4 L1191.8 546.5 L1191.8 544.4 L1191.6 542.3 L1191.1 540.0 L1190.4 537.8 L1189.5 535.6 L1188.3 533.4 L1187.0 531.3 L1185.5 529.4 L1183.9 527.7 L1182.2 526.2 L1180.5 524.9 L1178.7 523.9 L1176.9 523.2 L1175.1 522.8 L1173.5 522.7 L1171.9 522.9 L1170.4 523.4 L1169.2 524.3"/>
<path d="M1182.1 557.4L1187.7 554.1"/>
<path d="M1164.4 526.9L1170.1 523.6"/>
<path d="M1179.5 558.2 L1181.1 557.8 L1182.6 557.0 L1183.8 555.9 L1184.8 554.5 L1185.6 552.8 L1186.0 550.8 L1186.2 548.6 L1186.0 546.3 L1185.6 543.9 L1184.9 541.5 L1183.9 539.0 L1182.7 536.7 L1181.3 534.4 L1179.6 532.4 L1177.9 530.5 L1176.0 528.9 L1174.0 527.7 L1172.1 526.7 L1170.2 526.2 L1168.3 525.9 L1166.5 526.1 L1165.0 526.6 L1163.6 527.5 L1162.4 528.7"/>
<path d="M1181.2 555.0 L1181.8 554.0 L1182.3 553.0 L1182.6 551.8 L1182.9 550.4 L1183.0 549.0 L1182.9 547.6 L1182.7 546.1 L1182.4 544.5 L1182.0 542.9 L1181.4 541.3 L1180.7 539.8 L1179.9 538.3 L1179.0 536.8 L1178.0 535.4 L1176.9 534.2 L1175.8 533.0 L1174.6 531.9 L1173.3 531.0 L1172.1 530.2 L1170.8 529.6 L1169.6 529.2 L1168.3 528.9 L1167.2 528.8 L1166.0 528.8"/>
<path d="M1173.4 562.4L1179.8 557.5"/>
<path d="M1155.8 531.9L1163.2 528.8"/>
<ellipse cx="1164.6" cy="547.1" rx="10.9" ry="17.6" transform="rotate(-30.07 1164.6 547.1)" fill="#fff"/>
<ellipse cx="1164.6" cy="547.1" rx="9.3" ry="15.0" transform="rotate(-30.07 1164.6 547.1)"/>
<path d="M1173.6 559.1 L1171.9 559.4 L1170.1 559.3 L1168.1 558.7 L1166.1 557.7 L1164.2 556.3 L1162.3 554.6 L1160.6 552.5 L1159.1 550.3 L1157.9 547.9 L1157.0 545.4 L1156.4 542.9 L1156.2 540.5 L1156.3 538.3 L1156.8 536.3 L1157.6 534.7 L1158.7 533.3"/>
<path d="M1213.9 538.2 L1215.3 537.6 L1216.6 536.7 L1217.6 535.5 L1218.4 534.1 L1219.0 532.4 L1219.3 530.5 L1219.4 528.5 L1219.2 526.3 L1218.7 524.1 L1218.0 521.8 L1217.1 519.6 L1216.0 517.4 L1214.7 515.3 L1213.2 513.4 L1211.6 511.7 L1209.8 510.2 L1208.1 508.9 L1206.2 508.0 L1204.4 507.3 L1202.7 507.0 L1201.0 506.9 L1199.5 507.2 L1198.1 507.9 L1196.9 508.8"/>
<ellipse cx="1205.2" cy="523.6" rx="10.7" ry="17.2" transform="rotate(-30.07 1205.2 523.6)" fill="#fff"/>
<ellipse cx="1205.2" cy="523.6" rx="9.1" ry="14.6" transform="rotate(-30.07 1205.2 523.6)"/>
<path d="M1213.6 535.6 L1211.9 536.1 L1210.0 536.1 L1208.1 535.6 L1206.1 534.7 L1204.1 533.3 L1202.2 531.6 L1200.4 529.5 L1198.9 527.3 L1197.7 524.8 L1196.8 522.3 L1196.2 519.8 L1196.0 517.4 L1196.2 515.2 L1196.8 513.2 L1197.7 511.6 L1199.0 510.4"/>
<path d="M1266.2 524.6 L1268.2 523.1 L1270.0 521.1 L1271.4 518.8 L1272.5 516.1 L1273.2 513.0 L1273.5 509.7 L1273.4 506.2 L1272.9 502.6 L1272.0 498.8 L1270.8 495.0 L1269.2 491.3 L1267.3 487.7 L1265.1 484.2 L1262.7 481.0 L1260.0 478.0 L1257.2 475.4 L1254.2 473.1 L1251.2 471.3 L1248.2 469.9 L1245.3 469.0 L1242.4 468.6 L1239.6 468.7 L1237.1 469.2 L1234.7 470.3"/>
<path d="M1256.2 530.4L1266.2 524.6"/>
<path d="M1224.8 476.0L1234.7 470.3"/>
<ellipse cx="1240.5" cy="503.2" rx="19.5" ry="31.4" transform="rotate(-30.07 1240.5 503.2)" fill="#fff"/>
<ellipse cx="1240.5" cy="503.2" rx="18.4" ry="29.6" transform="rotate(-30.07 1240.5 503.2)"/>
<ellipse cx="1240.5" cy="503.2" rx="13.6" ry="22.0" transform="rotate(-30.07 1240.5 503.2)"/>
<ellipse cx="1240.5" cy="503.2" rx="17.1" ry="27.6" transform="rotate(-30.07 1240.5 503.2)" stroke-width="0.500"/>
<ellipse cx="1240.5" cy="503.2" rx="14.9" ry="24.0" transform="rotate(-30.07 1240.5 503.2)" stroke-width="0.500"/>
<path d="M1254.3 527.1L1252.5 524.0" stroke-width="0.500"/>
<path d="M1257.3 524.6L1255.1 521.8" stroke-width="0.500"/>
<path d="M1230.3 478.0L1231.6 481.3" stroke-width="0.500"/>
<path d="M1226.7 479.3L1228.5 482.4" stroke-width="0.500"/>
<path d="M1223.7 481.8L1225.9 484.6" stroke-width="0.500"/>
<path d="M1221.6 485.4L1224.1 487.7" stroke-width="0.500"/>
<path d="M1220.5 489.9L1223.1 491.6" stroke-width="0.500"/>
<path d="M1220.3 495.0L1222.9 496.1" stroke-width="0.500"/>
<path d="M1221.2 500.5L1223.7 500.9" stroke-width="0.500"/>
<path d="M1223.0 506.2L1225.3 505.8" stroke-width="0.500"/>
<path d="M1225.7 511.8L1227.6 510.6" stroke-width="0.500"/>
<path d="M1229.1 516.9L1230.6 515.1" stroke-width="0.500"/>
<path d="M1233.2 521.3L1234.1 518.9" stroke-width="0.500"/>
<path d="M1237.5 524.8L1237.9 522.0" stroke-width="0.500"/>
<path d="M1242.1 527.2L1241.9 524.1" stroke-width="0.500"/>
<path d="M1246.5 528.4L1245.7 525.1" stroke-width="0.500"/>
<path d="M1250.7 528.4L1249.4 525.1" stroke-width="0.500"/>
<path d="M1255.8 519.4 L1257.4 517.4 L1258.5 515.0 L1259.1 512.1 L1259.2 508.9 L1258.9 505.4 L1258.0 501.9 L1256.7 498.3 L1254.9 494.8 L1252.8 491.6 L1250.4 488.7 L1247.7 486.2 L1244.9 484.1 L1242.1 482.6 L1239.2 481.7 L1236.5 481.5 L1234.1 481.8"/>
<ellipse cx="1240.5" cy="503.2" rx="9.2" ry="14.8" transform="rotate(-30.07 1240.5 503.2)"/>
<path d="M1251.2 513.3 L1249.6 513.2 L1247.9 512.7 L1246.2 512.0 L1244.5 510.9 L1242.8 509.6 L1241.3 508.0 L1239.9 506.2 L1238.6 504.3 L1237.6 502.2 L1236.7 500.1 L1236.1 498.0 L1235.8 495.9 L1235.7 493.9 L1235.9 492.0 L1236.3 490.4 L1237.1 488.9"/>
<path d="M1250.3 502.8L1244.5 510.9"/>
<path d="M1312.1 482.1 L1313.6 481.4 L1314.9 480.5 L1315.9 479.3 L1316.8 477.8 L1317.4 476.0 L1317.7 474.1 L1317.8 472.0 L1317.6 469.7 L1317.1 467.4 L1316.4 465.1 L1315.5 462.7 L1314.3 460.5 L1312.9 458.3 L1311.4 456.3 L1309.7 454.5 L1307.9 453.0 L1306.1 451.7 L1304.2 450.7 L1302.3 450.0 L1300.5 449.7 L1298.8 449.7 L1297.2 450.0 L1295.7 450.6 L1294.5 451.6"/>
<ellipse cx="1303.0" cy="467.0" rx="11.0" ry="17.8" transform="rotate(-30.07 1303.0 467.0)" fill="#fff"/>
<ellipse cx="1303.0" cy="467.0" rx="9.3" ry="15.0" transform="rotate(-30.07 1303.0 467.0)"/>
<path d="M1311.7 479.2 L1310.0 479.7 L1308.1 479.7 L1306.1 479.2 L1304.0 478.3 L1302.0 476.9 L1300.0 475.1 L1298.2 473.0 L1296.7 470.7 L1295.4 468.1 L1294.5 465.6 L1293.9 463.0 L1293.7 460.5 L1293.9 458.2 L1294.5 456.2 L1295.4 454.6 L1296.7 453.3"/>
<path d="M914.5 691.9L977.0 655.7" stroke-dasharray="9 2.500 1.500 2.500" stroke-width="0.600"/>
<path d="M1012.0 635.5L1021.5 630.0" stroke-dasharray="9 2.500 1.500 2.500" stroke-width="0.600"/>
<path d="M1049.0 614.1L1056.0 610.0" stroke-dasharray="9 2.500 1.500 2.500" stroke-width="0.600"/>
<path d="M1104.0 582.2L1122.0 571.8" stroke-dasharray="9 2.500 1.500 2.500" stroke-width="0.600"/>
<path d="M1147.0 557.3L1152.5 554.1" stroke-dasharray="9 2.500 1.500 2.500" stroke-width="0.600"/>
<path d="M1190.0 532.4L1193.0 530.7" stroke-dasharray="9 2.500 1.500 2.500" stroke-width="0.600"/>
<path d="M1217.5 516.5L1221.0 514.5" stroke-dasharray="9 2.500 1.500 2.500" stroke-width="0.600"/>
<path d="M1270.0 486.1L1291.0 473.9" stroke-dasharray="9 2.500 1.500 2.500" stroke-width="0.600"/>
<path d="M1316.0 459.5L1330.0 451.4" stroke-dasharray="9 2.500 1.500 2.500" stroke-width="0.600"/>
<path d="M1070.0 601.9L1082.0 595.0" stroke-width="0.600"/>
<path d="M1129.0 567.7L1137.0 563.1" stroke-width="0.600"/>
<path d="M1160.0 549.8L1168.0 545.2" stroke-width="0.600"/>
<path d="M1200.0 526.6L1208.0 522.0" stroke-width="0.600"/>
<path d="M1236.0 505.8L1247.0 499.4" stroke-width="0.600"/>
<path d="M1297.0 470.5L1305.0 465.8" stroke-width="0.600"/>
<path d="M1334.0 449.1L1341.0 445.0" stroke-width="0.600"/>
<path d="M1419.1 423.2 L1419.4 423.1 L1419.6 422.9 L1419.8 422.4 L1420.0 421.9 L1420.1 421.4 L1420.2 421.0 L1420.4 420.7 L1420.7 420.7 L1421.0 420.9 L1421.4 421.2 L1421.8 421.7 L1422.3 422.3 L1422.7 422.8 L1423.1 423.1 L1423.5 423.3 L1423.8 423.2 L1423.9 422.9 L1424.0 422.4 L1424.0 421.8 L1424.0 421.2 L1424.0 420.6 L1424.0 420.2 L1424.2 420.0 L1424.5 420.0 L1424.8 420.2 L1425.3 420.5 L1425.8 420.9 L1426.3 421.3 L1426.8 421.6 L1427.2 421.7 L1427.4 421.6 L1427.5 421.3 L1427.5 420.7 L1427.4 420.1 L1427.2 419.5 L1427.1 418.8 L1427.0 418.3 L1427.0 418.0 L1427.2 417.8 L1427.5 417.8 L1427.9 418.0 L1428.4 418.2 L1429.0 418.4 L1429.5 418.6 L1429.9 418.6 L1430.1 418.4 L1430.2 418.1 L1430.1 417.6 L1429.8 417.0 L1429.6 416.4 L1429.3 415.7 L1429.0 415.2 L1428.9 414.7 L1429.0 414.4 L1429.2 414.3 L1429.5 414.2 L1430.0 414.3 L1430.5 414.3 L1431.0 414.3 L1431.4 414.2 L1431.6 414.0 L1431.6 413.7 L1431.5 413.2 L1431.2 412.7 L1430.8 412.1 L1430.4 411.5 L1430.0 411.0 L1429.8 410.5 L1429.7 410.1 L1429.7 409.8 L1430.0 409.6 L1430.4 409.5 L1430.8 409.4 L1431.2 409.2 L1431.6 409.0 L1431.8 408.7 L1431.8 408.4 L1431.6 407.9 L1431.3 407.5 L1430.8 407.0 L1430.3 406.5 L1429.9 406.0 L1429.5 405.6 L1429.3 405.2 L1429.2 404.9 L1429.3 404.6 L1429.5 404.3 L1429.9 404.0 L1430.2 403.6 L1430.5 403.3 L1430.6 402.9 L1430.6 402.5 L1430.4 402.1 L1430.1 401.7 L1429.6 401.4 L1429.1 401.0 L1428.6 400.7 L1428.1 400.4 L1427.8 400.1 L1427.6 399.7 L1427.5 399.4 L1427.6 399.0 L1427.8 398.5 L1428.0 398.1 L1428.2 397.6 L1428.2 397.1 L1428.2 396.7 L1428.0 396.3 L1427.7 396.0 L1427.2 395.7 L1426.7 395.5 L1426.2 395.4 L1425.7 395.2 L1425.3 395.0 L1425.0 394.8 L1424.8 394.4 L1424.8 394.0 L1424.8 393.5 L1424.9 392.9 L1424.9 392.3 L1424.9 391.8 L1424.8 391.3 L1424.5 390.9 L1424.2 390.6 L1423.8 390.5 L1423.3 390.5 L1422.9 390.5 L1422.4 390.5 L1422.0 390.5 L1421.7 390.4 L1421.4 390.1 L1421.2 389.7 L1421.1 389.2 L1421.0 388.6 L1420.9 387.9 L1420.8 387.3 L1420.6 386.8 L1420.3 386.4 L1420.0 386.2 L1419.6 386.1 L1419.2 386.2 L1418.8 386.4 L1418.5 386.7 L1418.1 386.8 L1417.8 386.9 L1417.5 386.8 L1417.2 386.5 L1417.0 386.0 L1416.8 385.4 L1416.5 384.7 L1416.3 384.1 L1416.0 383.5 L1415.7 383.1 L1415.4 382.9 L1415.1 383.0 L1414.7 383.2 L1414.4 383.5 L1414.2 383.9 L1413.9 384.3 L1413.7 384.5 L1413.4 384.5 L1413.1 384.4 L1412.8 384.0 L1412.5 383.5 L1412.1 382.9 L1411.7 382.3 L1411.4 381.7 L1411.0 381.4 L1410.7 381.2 L1410.4 381.3 L1410.2 381.6 L1410.0 382.0 L1409.9 382.5 L1409.7 383.0 L1409.6 383.4 L1409.4 383.7 L1409.2 383.7 L1408.8 383.5 L1408.4 383.1 L1408.0 382.6 L1407.5 382.1 L1407.1 381.6 L1406.7 381.3 L1406.3 381.1 L1406.1 381.2 L1405.9 381.6 L1405.9 382.1 L1405.9 382.7 L1405.9 383.3 L1405.9 383.8 L1405.8 384.2 L1405.6 384.4 L1405.4 384.4 L1405.0 384.2 L1404.5 383.8 L1404.0 383.4 L1403.5 383.1 L1403.0 382.8 L1402.7 382.7 L1402.4 382.8 L1402.3 383.2 L1402.4 383.7 L1402.5 384.3 L1402.6 385.0 L1402.8 385.6 L1402.9 386.1 L1402.8 386.5 L1402.6 386.6 L1402.3 386.6 L1401.9 386.4 L1401.4 386.2 L1400.8 386.0 L1400.3 385.8 L1400.0 385.8 L1399.7 386.0 L1399.7 386.3 L1399.8 386.8 L1400.0 387.4 L1400.3 388.1 L1400.6 388.7"/>
<path d="M1412.3 427.6L1420.4 421.7" stroke-width="0.550"/>
<path d="M1415.2 427.9L1422.9 421.5" stroke-width="0.550"/>
<path d="M1417.8 427.5L1425.1 420.8" stroke-width="0.550"/>
<path d="M1420.2 426.4L1427.0 419.5" stroke-width="0.550"/>
<path d="M1422.1 424.7L1428.5 417.6" stroke-width="0.550"/>
<path d="M1423.7 422.5L1429.6 415.3" stroke-width="0.550"/>
<path d="M1424.7 419.7L1430.3 412.6" stroke-width="0.550"/>
<path d="M1425.3 416.5L1430.5 409.5" stroke-width="0.550"/>
<path d="M1425.3 413.0L1430.2 406.3" stroke-width="0.550"/>
<path d="M1424.7 409.3L1429.4 402.9" stroke-width="0.550"/>
<path d="M1423.7 405.5L1428.2 399.5" stroke-width="0.550"/>
<path d="M1422.2 401.8L1426.6 396.1" stroke-width="0.550"/>
<path d="M1420.2 398.1L1424.6 393.0" stroke-width="0.550"/>
<path d="M1417.9 394.7L1422.3 390.1" stroke-width="0.550"/>
<path d="M1415.2 391.7L1419.8 387.6" stroke-width="0.550"/>
<path d="M1412.4 389.1L1417.2 385.6" stroke-width="0.550"/>
<path d="M1409.4 387.0L1414.4 384.1" stroke-width="0.550"/>
<path d="M1406.3 385.5L1411.7 383.1" stroke-width="0.550"/>
<path d="M1403.3 384.7L1409.1 382.7" stroke-width="0.550"/>
<path d="M1400.5 384.5L1406.7 382.9" stroke-width="0.550"/>
<path d="M1397.9 385.0L1404.5 383.7" stroke-width="0.550"/>
<path d="M1395.6 386.2L1402.6 385.1" stroke-width="0.550"/>
<path d="M1393.7 387.9L1401.2 387.0" stroke-width="0.550"/>
<path d="M1392.2 390.3L1400.1 389.4" stroke-width="0.550"/>
<path d="M1419.7 426.5 L1420.2 426.7 L1420.6 426.8 L1420.9 426.9 L1421.2 426.8 L1421.3 426.6 L1421.4 426.3 L1421.4 425.8 L1421.4 425.3 L1421.3 424.8 L1421.3 424.3 L1421.3 423.9 L1421.4 423.6 L1421.6 423.5 L1421.9 423.4 L1422.2 423.5 L1422.6 423.6 L1423.1 423.6 L1423.4 423.7 L1423.8 423.7 L1424.0 423.5 L1424.2 423.3 L1424.2 422.9 L1424.1 422.4 L1424.0 421.9 L1423.8 421.4 L1423.6 420.8 L1423.5 420.4 L1423.5 420.0 L1423.6 419.7 L1423.8 419.5 L1424.0 419.4 L1424.4 419.4 L1424.8 419.3 L1425.1 419.2 L1425.4 419.1 L1425.6 418.9 L1425.7 418.6 L1425.7 418.2 L1425.5 417.7 L1425.3 417.2 L1425.1 416.7 L1424.8 416.2 L1424.6 415.7 L1424.4 415.3 L1424.4 415.0 L1424.4 414.7 L1424.6 414.4 L1424.8 414.2 L1425.1 414.0 L1425.4 413.8 L1425.7 413.5 L1425.8 413.2 L1425.9 412.9 L1425.8 412.5 L1425.6 412.1 L1425.3 411.6 L1425.0 411.2 L1424.6 410.7 L1424.3 410.3 L1424.1 409.9 L1423.9 409.5 L1423.8 409.2 L1423.9 408.8 L1424.0 408.5 L1424.2 408.2 L1424.4 407.8 L1424.6 407.5 L1424.7 407.1 L1424.7 406.7 L1424.5 406.3 L1424.3 405.9 L1424.0 405.5 L1423.6 405.2 L1423.2 404.8 L1422.8 404.5 L1422.5 404.1 L1422.2 403.8 L1422.0 403.4 L1422.0 403.1 L1422.0 402.7 L1422.0 402.3 L1422.1 401.8 L1422.2 401.4 L1422.2 400.9 L1422.1 400.5 L1422.0 400.1 L1421.7 399.7 L1421.4 399.4 L1421.0 399.2 L1420.6 398.9 L1420.1 398.7 L1419.7 398.5 L1419.4 398.2 L1419.2 397.9 L1419.0 397.6 L1418.9 397.2 L1418.8 396.7 L1418.8 396.2 L1418.7 395.7 L1418.6 395.2 L1418.5 394.8 L1418.3 394.4 L1418.0 394.0 L1417.7 393.8 L1417.3 393.7 L1416.9 393.6 L1416.5 393.5 L1416.1 393.4 L1415.7 393.3 L1415.4 393.1 L1415.2 392.8 L1415.0 392.4 L1414.8 392.0 L1414.6 391.5 L1414.5 390.9 L1414.3 390.4 L1414.1 389.9 L1413.8 389.6 L1413.5 389.3 L1413.2 389.1 L1412.9 389.1 L1412.5 389.1 L1412.1 389.2 L1411.8 389.2 L1411.4 389.3 L1411.1 389.2 L1410.8 389.1 L1410.6 388.8 L1410.3 388.4 L1410.0 387.9 L1409.8 387.4 L1409.5 386.9 L1409.2 386.4 L1408.9 386.1 L1408.6 385.8 L1408.3 385.7 L1408.0 385.8 L1407.7 385.9 L1407.4 386.1 L1407.1 386.3 L1406.8 386.5 L1406.6 386.6 L1406.3 386.6 L1406.0 386.5 L1405.7 386.2 L1405.4 385.8 L1405.0 385.4 L1404.7 384.9 L1404.3 384.5 L1404.0 384.2 L1403.6 384.0 L1403.3 383.9 L1403.1 384.1 L1402.8 384.3 L1402.6 384.6 L1402.5 385.0 L1402.3 385.3 L1402.1 385.5 L1401.8 385.7 L1401.6 385.7 L1401.3 385.6 L1400.9 385.3 L1400.5 385.0 L1400.1 384.6 L1399.7 384.3 L1399.4 384.0 L1399.0 383.9 L1398.7 383.9 L1398.5 384.1 L1398.4 384.4 L1398.2 384.8 L1398.2 385.2 L1398.1 385.7 L1398.0 386.0 L1397.9 386.3 L1397.7 386.5 L1397.4 386.5 L1397.1 386.4 L1396.7 386.2 L1396.3 386.0 L1395.8 385.7 L1395.4 385.6 L1395.1 385.5 L1394.8 385.6 L1394.7 385.8 L1394.6 386.2 L1394.6 386.6 L1394.6 387.1 L1394.7 387.6 L1394.7 388.1 L1394.7 388.5 L1394.6 388.8 L1394.4 388.9 L1394.1 389.0 L1393.8 388.9 L1393.4 388.9 L1392.9 388.8 L1392.6 388.7 L1392.2 388.8 L1392.0 388.9 L1391.8 389.2 L1391.8 389.5 L1391.9 390.0 L1392.0 390.5 L1392.2 391.1 L1392.4 391.6 L1392.5 392.0 L1392.5 392.4 L1392.4 392.7 L1392.2 392.9 L1392.0 393.0 L1391.6 393.1 L1391.2 393.1 L1390.9 393.2 L1390.6 393.3 L1390.4 393.6 L1390.3 393.9 L1390.3 394.2 L1390.5 394.7 L1390.7 395.2 L1390.9 395.7 L1391.2 396.2 L1391.4 396.7 L1391.6 397.1 L1391.6 397.5 L1391.6 397.8 L1391.4 398.0 L1391.2 398.2 L1390.9 398.4 L1390.6 398.6 L1390.3 398.9 L1390.2 399.2 L1390.1 399.5 L1390.2 399.9 L1390.4 400.3 L1390.7 400.8 L1391.0 401.3 L1391.4 401.7 L1391.7 402.1 L1391.9 402.5 L1392.1 402.9 L1392.2 403.3 L1392.1 403.6 L1392.0 403.9 L1391.8 404.3 L1391.6 404.6 L1391.4 405.0 L1391.3 405.3 L1391.3 405.7 L1391.5 406.1 L1391.7 406.5 L1392.0 406.9 L1392.4 407.2 L1392.8 407.6 L1393.2 407.9 L1393.5 408.3 L1393.8 408.6 L1394.0 409.0 L1394.0 409.3 L1394.0 409.7 L1394.0 410.2 L1393.9 410.6 L1393.8 411.1 L1393.8 411.5 L1393.9 411.9 L1394.0 412.3 L1394.3 412.7 L1394.6 413.0 L1395.0 413.2 L1395.4 413.5 L1395.9 413.7 L1396.3 413.9 L1396.6 414.2 L1396.8 414.5 L1397.0 414.8 L1397.1 415.2 L1397.2 415.7 L1397.2 416.2 L1397.3 416.7 L1397.4 417.2 L1397.5 417.7 L1397.7 418.1 L1398.0 418.4 L1398.3 418.6 L1398.7 418.8 L1399.1 418.9 L1399.5 418.9 L1399.9 419.0 L1400.3 419.1 L1400.6 419.3 L1400.8 419.6 L1401.0 420.0 L1401.2 420.4 L1401.4 420.9 L1401.5 421.5 L1401.7 422.0 L1401.9 422.5 L1402.2 422.9 L1402.5 423.1 L1402.8 423.3 L1403.1 423.4 L1403.5 423.3 L1403.9 423.2 L1404.2 423.2 L1404.6 423.1 L1404.9 423.2 L1405.2 423.4 L1405.4 423.6 L1405.7 424.0 L1406.0 424.5 L1406.2 425.0 L1406.5 425.5 L1406.8 426.0 L1407.1 426.3 L1407.4 426.6 L1407.7 426.7 L1408.0 426.6 L1408.3 426.5 L1408.6 426.3 L1408.9 426.1 L1409.2 425.9 L1409.4 425.8 L1409.7 425.8 L1410.0 425.9 L1410.3 426.2 L1410.6 426.6 L1411.0 427.0 L1411.3 427.5 L1411.7 427.9 L1412.0 428.2 L1412.4 428.4 L1412.7 428.5 L1412.9 428.4 L1413.2 428.1 L1413.4 427.8 L1413.5 427.5 L1413.7 427.1 L1413.9 426.9 L1414.2 426.7 L1414.4 426.7 L1414.7 426.9 L1415.1 427.1 L1415.5 427.5 L1415.9 427.8 L1416.3 428.2 L1416.6 428.4 L1417.0 428.5 L1417.3 428.5 L1417.5 428.4 L1417.6 428.1 L1417.8 427.7 L1417.8 427.2 L1417.9 426.8 L1418.0 426.4 L1418.1 426.1 L1418.3 425.9 L1418.6 425.9 L1418.9 426.0 L1419.3 426.2 L1419.7 426.5Z" fill="#fff"/>
<ellipse cx="1408.0" cy="406.2" rx="12.8" ry="20.6" transform="rotate(-30.07 1408.0 406.2)"/>
<ellipse cx="1407.1" cy="406.7" rx="9.7" ry="15.6" transform="rotate(-30.07 1407.1 406.7)"/>
<path d="M1413.4 417.9 L1414.4 416.6 L1415.0 414.9 L1415.4 412.9 L1415.3 410.7 L1414.9 408.3 L1414.1 406.0 L1412.9 403.7 L1411.5 401.5 L1409.9 399.6 L1408.1 397.9 L1406.3 396.7 L1404.4 395.9 L1402.5 395.5 L1400.8 395.6 L1399.3 396.2 L1398.1 397.2 L1397.1 398.7 L1396.5 400.4 L1396.3 402.5 L1396.4 404.7 L1397.0 407.1 L1397.8 409.4 L1399.0 411.7 L1400.5 413.9 L1402.1 415.7 L1403.9 417.3 L1405.8 418.4 L1407.7 419.1 L1409.5 419.4 L1411.2 419.2"/>
<path d="M1341.1 456.7L1406.6 418.8L1396.4 401.1L1330.9 439.1Z" fill="#fff" stroke="none"/>
<path d="M1341.1 456.7L1406.6 418.8"/>
<path d="M1330.9 439.1L1396.4 401.1"/>
<ellipse cx="1336.0" cy="447.9" rx="6.3" ry="10.2" transform="rotate(-30.07 1336.0 447.9)" fill="#fff"/>
<path d="M1366.6 442.0 L1367.7 441.0 L1368.5 439.7 L1368.9 438.1 L1369.0 436.2 L1368.6 434.1 L1368.0 432.0 L1367.0 430.0 L1365.7 428.1 L1364.2 426.4 L1362.6 425.1 L1360.9 424.3 L1359.3 423.8 L1357.7 423.8 L1356.4 424.3"/>
<path d="M1372.6 438.5 L1373.7 437.6 L1374.5 436.2 L1374.9 434.6 L1375.0 432.7 L1374.6 430.6 L1374.0 428.5 L1373.0 426.5 L1371.7 424.6 L1370.2 423.0 L1368.6 421.7 L1366.9 420.8 L1365.3 420.3 L1363.7 420.3 L1362.4 420.8"/>
<path d="M1385.6 431.0 L1386.7 430.0 L1387.5 428.7 L1387.9 427.1 L1388.0 425.2 L1387.6 423.1 L1387.0 421.0 L1386.0 419.0 L1384.7 417.1 L1383.2 415.4 L1381.6 414.1 L1379.9 413.3 L1378.3 412.8 L1376.7 412.8 L1375.4 413.3"/>
<path d="M1398.6 423.4 L1399.7 422.5 L1400.5 421.2 L1400.9 419.5 L1401.0 417.6 L1400.6 415.6 L1400.0 413.5 L1399.0 411.4 L1397.7 409.5 L1396.2 407.9 L1394.6 406.6 L1392.9 405.7 L1391.3 405.3 L1389.7 405.3 L1388.4 405.8"/>
<path d="M1404.1 420.2 L1405.2 419.3 L1406.0 418.0 L1406.4 416.3 L1406.5 414.4 L1406.1 412.4 L1405.5 410.3 L1404.5 408.2 L1403.2 406.4 L1401.7 404.7 L1400.1 403.4 L1398.4 402.5 L1396.8 402.1 L1395.2 402.1 L1393.9 402.6"/>
<path d="M1344.4 454.3L1367.4 441.0" stroke-width="0.700"/>
<path d="M1345.3 452.4L1368.3 439.1" stroke-width="0.700"/>
<path d="M1345.5 450.1L1368.5 436.8" stroke-width="0.700"/>
<path d="M1345.1 447.5L1368.1 434.2" stroke-width="0.700"/>
<path d="M1344.1 444.9L1367.1 431.5" stroke-width="0.700"/>
<path d="M1342.7 442.3L1365.7 429.0" stroke-width="0.700"/>
<path d="M1340.9 440.2L1363.9 426.9" stroke-width="0.700"/>
<path d="M1338.8 438.6L1361.8 425.2" stroke-width="0.700"/>
<path d="M1336.7 437.6L1359.7 424.3" stroke-width="0.700"/>
<path d="M1334.6 437.4L1357.6 424.1" stroke-width="0.700"/>
<path d="M1374.4 436.9L1386.4 430.0" stroke-width="0.700"/>
<path d="M1375.3 435.1L1387.3 428.1" stroke-width="0.700"/>
<path d="M1375.5 432.8L1387.5 425.8" stroke-width="0.700"/>
<path d="M1375.1 430.2L1387.1 423.2" stroke-width="0.700"/>
<path d="M1374.1 427.5L1386.1 420.5" stroke-width="0.700"/>
<path d="M1372.7 425.0L1384.7 418.0" stroke-width="0.700"/>
<path d="M1370.9 422.8L1382.9 415.9" stroke-width="0.700"/>
<path d="M1368.8 421.2L1380.8 414.2" stroke-width="0.700"/>
<path d="M1366.7 420.2L1378.7 413.3" stroke-width="0.700"/>
<path d="M1364.6 420.0L1376.6 413.1" stroke-width="0.700"/>
<path d="M1333.0 449.6L1341.0 445.0" stroke-width="0.600"/>
<path d="M1467.1 445.5 L1466.8 446.1 L1466.5 446.6 L1466.2 447.2 L1465.9 447.6 L1465.7 448.1 L1465.4 448.4 L1465.1 448.6 L1464.9 448.8 L1464.6 448.8 L1464.4 448.7 L1464.2 448.5 L1464.1 448.2 L1463.9 447.8 L1463.8 447.3 L1463.6 446.9 L1463.5 446.4 L1463.4 445.9 L1463.3 445.5 L1463.2 445.1 L1463.0 444.8 L1462.9 444.6 L1462.7 444.4 L1462.5 444.5 L1462.2 444.6 L1462.0 444.8 L1461.7 445.1 L1461.4 445.5 L1461.1 446.0 L1460.7 446.5 L1460.4 447.0 L1460.0 447.5 L1459.7 448.0 L1459.3 448.4 L1459.0 448.7 L1458.7 449.0 L1458.5 449.1 L1458.2 449.1 L1458.0 449.0 L1457.9 448.8 L1457.7 448.5 L1457.6 448.2 L1457.6 447.7 L1457.5 447.2 L1457.4 446.6 L1457.4 446.1 L1457.4 445.6 L1457.3 445.1 L1457.2 444.7 L1457.1 444.4 L1457.0 444.2 L1456.8 444.1 L1456.6 444.1 L1456.4 444.2 L1456.1 444.5 L1455.7 444.8 L1455.4 445.1 L1455.0 445.6 L1454.6 446.0 L1454.2 446.5 L1453.8 446.9 L1453.5 447.3 L1453.1 447.7 L1452.8 447.9 L1452.5 448.0 L1452.2 448.1 L1452.0 448.0 L1451.9 447.8 L1451.8 447.5 L1451.7 447.2 L1451.7 446.7 L1451.7 446.2 L1451.7 445.6 L1451.7 445.1 L1451.8 444.5 L1451.8 444.0 L1451.8 443.5 L1451.8 443.1 L1451.7 442.8 L1451.6 442.6 L1451.4 442.5 L1451.2 442.5 L1450.9 442.6 L1450.6 442.8 L1450.2 443.1 L1449.8 443.4 L1449.4 443.8 L1449.0 444.2 L1448.6 444.6 L1448.2 445.0 L1447.8 445.3 L1447.4 445.5 L1447.1 445.6 L1446.8 445.7 L1446.6 445.6 L1446.5 445.5 L1446.4 445.2 L1446.3 444.8 L1446.3 444.4 L1446.4 443.9 L1446.5 443.3 L1446.6 442.7 L1446.7 442.1 L1446.8 441.6 L1446.9 441.1 L1446.9 440.6 L1446.9 440.2 L1446.9 439.9 L1446.8 439.7 L1446.6 439.6 L1446.4 439.6 L1446.1 439.7 L1445.7 439.9 L1445.3 440.2 L1444.9 440.4 L1444.5 440.7 L1444.0 441.1 L1443.6 441.4 L1443.1 441.6 L1442.7 441.8 L1442.4 442.0 L1442.1 442.0 L1441.9 441.9 L1441.7 441.8 L1441.6 441.5 L1441.6 441.2 L1441.7 440.8 L1441.8 440.3 L1441.9 439.7 L1442.1 439.2 L1442.2 438.6 L1442.4 438.0 L1442.6 437.5 L1442.7 436.9 L1442.8 436.5 L1442.8 436.1 L1442.8 435.9 L1442.7 435.7 L1442.5 435.6 L1442.3 435.6 L1442.0 435.7 L1441.6 435.8 L1441.2 436.0 L1440.7 436.2 L1440.3 436.4 L1439.8 436.6 L1439.3 436.8 L1438.9 437.0 L1438.6 437.1 L1438.2 437.1 L1438.0 437.1 L1437.8 436.9 L1437.7 436.7 L1437.7 436.4 L1437.8 436.0 L1437.9 435.5 L1438.1 435.0 L1438.3 434.5 L1438.6 433.9 L1438.8 433.3 L1439.1 432.8 L1439.3 432.2 L1439.5 431.8 L1439.6 431.4 L1439.6 431.0 L1439.6 430.8 L1439.5 430.6 L1439.3 430.5 L1439.0 430.4 L1438.7 430.5 L1438.3 430.6 L1437.9 430.7 L1437.4 430.8 L1437.0 430.9 L1436.5 431.1 L1436.1 431.2 L1435.7 431.2 L1435.3 431.2 L1435.1 431.1 L1434.9 431.0 L1434.8 430.8 L1434.8 430.5 L1434.9 430.1 L1435.0 429.7 L1435.2 429.2 L1435.5 428.7 L1435.8 428.2 L1436.1 427.6 L1436.4 427.1 L1436.7 426.6 L1436.9 426.1 L1437.1 425.7 L1437.3 425.3 L1437.3 425.0 L1437.3 424.7 L1437.2 424.6 L1437.0 424.4 L1436.7 424.4 L1436.4 424.3 L1436.0 424.4 L1435.6 424.4 L1435.1 424.4 L1434.6 424.5 L1434.2 424.5 L1433.8 424.5 L1433.5 424.4 L1433.2 424.3 L1433.0 424.2 L1432.9 424.0 L1432.9 423.7 L1432.9 423.4 L1433.1 423.0 L1433.3 422.5 L1433.6 422.1 L1433.9 421.6 L1434.3 421.1 L1434.6 420.6 L1435.0 420.1 L1435.3 419.7 L1435.6 419.2 L1435.8 418.8 L1436.0 418.5 L1436.0 418.2 L1436.0 418.0 L1435.9 417.8 L1435.7 417.6 L1435.4 417.5 L1435.1 417.4 L1434.7 417.3 L1434.3 417.3 L1433.8 417.2 L1433.4 417.2 L1433.0 417.1 L1432.7 417.0 L1432.4 416.8 L1432.2 416.7 L1432.1 416.4 L1432.0 416.2 L1432.1 415.9 L1432.2 415.5 L1432.5 415.1 L1432.7 414.7 L1433.1 414.3 L1433.5 413.9 L1433.9 413.4 L1434.3 413.0 L1434.7 412.6 L1435.0 412.2 L1435.3 411.8 L1435.6 411.4 L1435.7 411.1 L1435.8 410.9 L1435.7 410.6 L1435.6 410.4 L1435.4 410.2 L1435.1 410.0 L1434.8 409.9 L1434.4 409.7 L1434.1 409.6 L1433.7 409.4 L1433.3 409.3 L1433.0 409.1 L1432.7 408.9 L1432.5 408.6 L1432.3 408.4 L1432.3 408.1 L1432.3 407.8 L1432.5 407.5 L1432.7 407.2 L1433.0 406.8 L1433.3 406.5 L1433.7 406.1 L1434.2 405.7 L1434.6 405.3 L1435.1 405.0 L1435.5 404.6 L1435.8 404.3 L1436.1 404.0 L1436.3 403.7 L1436.5 403.4 L1436.5 403.1 L1436.5 402.9 L1436.4 402.6 L1436.2 402.4 L1435.9 402.1 L1435.6 401.9 L1435.3 401.7 L1435.0 401.4 L1434.6 401.2 L1434.3 400.9 L1434.0 400.7 L1433.8 400.4 L1433.7 400.1 L1433.7 399.8 L1433.7 399.5 L1433.8 399.2 L1434.0 398.9 L1434.3 398.6 L1434.7 398.3 L1435.1 398.0 L1435.5 397.7 L1436.0 397.4 L1436.4 397.1 L1436.9 396.9 L1437.3 396.6 L1437.6 396.3 L1437.9 396.0 L1438.1 395.8 L1438.3 395.5 L1438.3 395.2 L1438.3 395.0 L1438.2 394.7 L1438.0 394.4 L1437.8 394.1 L1437.5 393.8 L1437.2 393.4 L1437.0 393.1 L1436.7 392.8 L1436.4 392.4 L1436.3 392.1 L1436.1 391.8 L1436.1 391.5 L1436.1 391.1 L1436.2 390.8 L1436.4 390.6 L1436.7 390.3 L1437.0 390.0 L1437.4 389.8 L1437.8 389.6 L1438.3 389.4 L1438.8 389.2 L1439.2 389.0 L1439.7 388.8 L1440.1 388.6 L1440.4 388.4 L1440.7 388.2 L1440.9 387.9 L1441.0 387.7 L1441.1 387.4 L1441.0 387.1 L1441.0 386.7 L1440.8 386.4 L1440.6 386.0 L1440.4 385.6 L1440.2 385.2 L1440.0 384.8 L1439.8 384.4 L1439.6 384.0 L1439.5 383.6 L1439.5 383.3 L1439.5 382.9 L1439.6 382.6 L1439.8 382.4 L1440.0 382.1 L1440.4 381.9 L1440.7 381.8 L1441.1 381.6 L1441.6 381.5 L1442.1 381.4 L1442.5 381.3 L1443.0 381.2 L1443.4 381.1 L1443.8 380.9 L1444.1 380.8 L1444.3 380.6 L1444.5 380.4 L1444.7 380.1 L1444.7 379.8 L1444.7 379.5 L1444.7 379.1 L1444.6 378.7 L1444.4 378.2 L1444.3 377.8 L1444.1 377.3 L1444.0 376.8 L1443.9 376.4 L1443.8 375.9 L1443.8 375.5 L1443.8 375.2 L1443.9 374.8 L1444.1 374.6 L1444.3 374.3 L1444.6 374.2 L1445.0 374.0 L1445.3 374.0 L1445.8 373.9 L1446.2 373.9 L1446.6 373.9 L1447.1 373.9 L1447.5 373.9 L1447.9 373.8 L1448.2 373.8 L1448.5 373.7 L1448.8 373.5 L1449.0 373.3 L1449.1 373.0 L1449.2 372.7 L1449.2 372.3 L1449.2 371.9 L1449.1 371.4 L1449.1 370.9 L1449.0 370.4 L1448.9 369.8 L1448.9 369.3 L1448.8 368.8 L1448.9 368.4 L1448.9 368.0 L1449.0 367.6 L1449.2 367.4 L1449.4 367.1 L1449.7 367.0 L1450.0 366.9 L1450.3 366.9 L1450.7 366.9 L1451.1 367.0 L1451.5 367.0 L1451.9 367.1 L1452.3 367.2 L1452.7 367.3 L1453.1 367.3 L1453.4 367.3 L1453.7 367.2 L1453.9 367.1 L1454.1 366.9 L1454.2 366.6 L1454.3 366.2 L1454.4 365.8 L1454.4 365.3 L1454.4 364.8 L1454.4 364.2 L1454.4 363.7 L1454.4 363.1 L1454.5 362.6 L1454.5 362.1 L1454.6 361.7 L1454.7 361.3 L1454.9 361.0 L1455.1 360.7 L1455.4 360.6 L1455.7 360.5 L1456.0 360.5 L1456.3 360.6 L1456.7 360.7 L1457.0 360.9 L1457.4 361.1 L1457.8 361.3 L1458.1 361.4 L1458.5 361.6 L1458.8 361.7 L1459.1 361.7 L1459.3 361.6 L1459.5 361.5 L1459.7 361.3 L1459.9 361.0 L1460.0 360.6 L1460.1 360.1 L1460.2 359.6 L1460.3 359.0 L1460.4 358.5 L1460.5 357.9 L1460.5 357.3 L1460.7 356.8 L1460.8 356.3 L1460.9 355.9 L1461.1 355.6 L1461.3 355.3 L1461.6 355.2 L1461.8 355.1 L1462.1 355.2 L1462.4 355.3 L1462.7 355.4 L1463.0 355.7 L1463.4 355.9 L1463.7 356.2 L1464.0 356.5 L1464.3 356.7 L1464.6 356.9 L1464.9 357.0 L1465.1 357.1 L1465.4 357.0 L1465.6 356.9 L1465.8 356.7 L1465.9 356.3 L1466.1 355.9 L1466.3 355.4 L1466.4 354.9 L1466.6 354.3 L1466.7 353.7 L1466.9 353.2 L1467.1 352.6 L1467.2 352.1 L1467.4 351.7 L1467.6 351.3 L1467.9 351.0 L1468.1 350.9 L1468.3 350.8 L1468.6 350.9 L1468.9 351.0 L1469.1 351.2 L1469.4 351.5 L1469.7 351.8 L1469.9 352.2 L1470.2 352.5 L1470.4 352.9 L1470.7 353.2 L1470.9 353.4 L1471.1 353.5 L1471.4 353.6 L1471.6 353.6 L1471.8 353.4 L1472.0 353.2 L1472.2 352.8 L1472.4 352.4 L1472.7 351.9 L1472.9 351.4 L1473.1 350.8 L1473.3 350.2 L1473.6 349.7 L1473.8 349.1 L1474.0 348.7 L1474.3 348.3 L1474.5 348.0 L1474.8 347.8 L1475.0 347.8 L1475.2 347.8 L1475.5 347.9 L1475.7 348.2 L1475.9 348.5 L1476.1 348.9 L1476.3 349.3 L1476.5 349.7 L1476.7 350.1 L1476.9 350.5 L1477.1 350.9 L1477.3 351.1 L1477.4 351.3 L1477.7 351.4 L1477.9 351.3 L1478.1 351.2 L1478.3 350.9 L1478.6 350.6 L1478.8 350.1 L1479.1 349.6 L1479.4 349.1 L1479.7 348.5 L1480.0 348.0 L1480.3 347.5 L1480.6 347.0 L1480.9 346.6 L1481.1 346.3 L1481.4 346.1 L1481.6 346.0 L1481.8 346.1 L1482.1 346.2 L1482.2 346.5 L1482.4 346.8 L1482.5 347.2 L1482.7 347.6 L1482.8 348.1 L1482.9 348.6 L1483.0 349.1 L1483.2 349.5 L1483.3 349.9 L1483.4 350.1 L1483.6 350.3 L1483.8 350.4 L1484.0 350.3 L1484.3 350.2 L1484.5 349.9 L1484.8 349.6 L1485.1 349.2 L1485.5 348.7 L1485.8 348.2 L1486.2 347.6 L1486.5 347.2 L1486.9 346.7 L1487.2 346.3 L1487.5 346.0 L1487.8 345.8 L1488.0 345.7 L1488.2 345.7 L1488.4 345.8 L1488.6 346.1 L1488.7 346.4 L1488.8 346.8 L1488.9 347.3 L1488.9 347.8 L1489.0 348.4 L1489.0 348.9 L1489.1 349.4 L1489.1 349.8 L1489.2 350.2 L1489.3 350.5 L1489.5 350.6 L1489.7 350.7 L1489.9 350.7 L1490.2 350.5 L1490.5 350.3 L1490.8 349.9 L1491.1 349.5 L1491.5 349.1 L1491.9 348.6 L1492.3 348.2 L1492.7 347.7 L1493.1 347.4 L1493.4 347.1 L1493.7 346.8 L1494.0 346.7 L1494.2 346.7 L1494.4 346.9 L1494.6 347.1 L1494.7 347.4 L1494.7 347.8 L1494.7 348.3 L1494.7 348.8 L1494.7 349.4 L1494.7 350.0 L1494.6 350.5 L1494.6 351.0 L1494.6 351.5 L1494.7 351.8 L1494.8 352.1 L1494.9 352.3 L1495.1 352.3 L1495.3 352.3 L1495.6 352.1 L1495.9 351.9 L1496.3 351.6 L1496.7 351.2 L1497.1 350.8 L1497.6 350.5 L1498.0 350.1 L1498.4 349.7 L1498.8 349.5 L1499.1 349.3 L1499.4 349.1 L1499.7 349.1 L1499.9 349.2 L1500.0 349.4 L1500.1 349.7 L1500.1 350.1 L1500.1 350.6 L1500.0 351.1 L1499.9 351.7 L1499.8 352.3 L1499.7 352.9 L1499.6 353.4 L1499.5 353.9 L1499.5 354.4 L1499.5 354.7 L1499.6 355.0 L1499.7 355.1 L1499.9 355.2 L1500.1 355.2 L1500.4 355.0 L1500.8 354.8 L1501.2 354.6 L1501.7 354.3 L1502.1 354.0 L1502.6 353.6 L1503.0 353.4 L1503.4 353.1 L1503.8 352.9 L1504.1 352.8 L1504.4 352.8 L1504.6 352.9 L1504.7 353.1 L1504.8 353.4 L1504.8 353.8 L1504.7 354.2 L1504.6 354.7 L1504.5 355.3 L1504.3 355.9 L1504.1 356.4 L1503.9 357.0 L1503.8 357.6 L1503.6 358.0 L1503.6 358.4 L1503.6 358.8 L1503.6 359.0 L1503.8 359.2 L1504.0 359.2 L1504.2 359.2 L1504.6 359.1 L1505.0 359.0 L1505.4 358.8 L1505.8 358.5 L1506.3 358.3 L1506.8 358.1 L1507.2 357.9 L1507.6 357.8 L1508.0 357.7 L1508.3 357.7 L1508.5 357.8 L1508.6 358.0 L1508.7 358.2 L1508.7 358.6 L1508.6 359.0 L1508.4 359.5 L1508.2 360.0 L1508.0 360.6"/>
<path d="M1467.1 445.5L1472.8 449.5"/>
<path d="M1507.3 361.3L1513.4 364.4"/>
<ellipse cx="1485.2" cy="403.6" rx="32.5" ry="48.9" transform="rotate(27.30 1485.2 403.6)" fill="#fff"/>
<path d="M1490.5 443.9 L1487.2 445.6 L1483.9 446.8 L1480.6 447.7 L1477.3 448.3 L1474.1 448.4 L1471.0 448.1 L1468.1 447.5 L1465.3 446.4 L1462.7 445.0 L1460.3 443.2 L1458.2 441.1 L1456.3 438.6 L1454.6 435.9 L1453.3 432.8 L1452.2 429.5 L1451.4 426.0 L1450.9 422.3 L1450.8 418.4 L1450.9 414.4 L1451.4 410.3 L1452.2 406.1 L1453.3 401.9 L1454.6 397.8 L1456.3 393.7 L1458.2 389.7 L1460.4 385.8 L1462.7 382.1 L1465.3 378.5 L1468.1 375.2 L1471.1 372.2 L1474.1 369.4 L1477.3 367.0 L1480.6 364.9 L1483.9 363.1 L1487.2 361.7 L1490.5 360.6 L1493.8 360.0 L1497.0 359.7 L1500.1 359.9 L1503.1 360.4 L1505.9 361.3 L1508.6 362.6 L1511.1 364.3 L1513.3 366.3 L1515.3 368.6 L1517.0 371.3 L1518.5 374.2 L1519.7 377.5 L1520.5 380.9 L1521.1 384.6"/>
<path d="M1491.2 443.0 L1488.0 444.6 L1484.8 445.8 L1481.6 446.7 L1478.5 447.2 L1475.4 447.4 L1472.4 447.1 L1469.6 446.5 L1466.9 445.5 L1464.4 444.1 L1462.1 442.4 L1460.0 440.3 L1458.2 437.9 L1456.6 435.3 L1455.3 432.3 L1454.2 429.1 L1453.5 425.7 L1453.0 422.1 L1452.9 418.4 L1453.0 414.5 L1453.5 410.5 L1454.2 406.5 L1455.3 402.5 L1456.6 398.4 L1458.2 394.5 L1460.0 390.6 L1462.1 386.9 L1464.4 383.3 L1466.9 379.9 L1469.6 376.7 L1472.5 373.7 L1475.4 371.1 L1478.5 368.7 L1481.7 366.6 L1484.8 364.9 L1488.1 363.6 L1491.3 362.6 L1494.4 361.9 L1497.5 361.7 L1500.5 361.8 L1503.4 362.3 L1506.2 363.2 L1508.7 364.5 L1511.1 366.1 L1513.3 368.0 L1515.2 370.3 L1516.9 372.9 L1518.3 375.7 L1519.4 378.8 L1520.3 382.2 L1520.8 385.7"/>
<ellipse cx="1486.5" cy="404.3" rx="20.0" ry="30.0" transform="rotate(27.30 1486.5 404.3)"/>
<path d="M1494.4 376.3 L1495.4 377.8 L1496.3 379.4 L1497.0 381.2 L1497.5 383.1 L1498.0 385.1 L1498.2 387.2 L1498.3 389.4 L1498.2 391.7 L1498.0 394.0 L1497.7 396.3 L1497.1 398.7 L1496.5 401.0 L1495.6 403.4 L1494.7 405.7 L1493.6 407.9 L1492.4 410.1 L1491.1 412.3 L1489.6 414.3 L1488.1 416.2 L1486.5 418.0 L1484.8 419.6 L1483.0 421.2 L1481.2 422.5 L1479.4 423.7 L1477.5 424.7 L1475.6 425.6 L1473.8 426.2 L1471.9 426.6 L1470.1 426.9 L1468.3 427.0"/>
<ellipse cx="1507.7" cy="374.9" rx="1.500" ry="2.300" transform="rotate(27.3 1507.7 374.9)"/>
<ellipse cx="1507.4" cy="374.7" rx="0.800" ry="1.400" transform="rotate(27.3 1507.7 374.9)" stroke-width="0.450"/>
<ellipse cx="1513.8" cy="387.6" rx="1.500" ry="2.300" transform="rotate(27.3 1513.8 387.6)"/>
<ellipse cx="1513.5" cy="387.4" rx="0.800" ry="1.400" transform="rotate(27.3 1513.8 387.6)" stroke-width="0.450"/>
<ellipse cx="1512.7" cy="404.8" rx="1.500" ry="2.300" transform="rotate(27.3 1512.7 404.8)"/>
<ellipse cx="1512.4" cy="404.6" rx="0.800" ry="1.400" transform="rotate(27.3 1512.7 404.8)" stroke-width="0.450"/>
<ellipse cx="1504.8" cy="421.9" rx="1.500" ry="2.300" transform="rotate(27.3 1504.8 421.9)"/>
<ellipse cx="1504.5" cy="421.7" rx="0.800" ry="1.400" transform="rotate(27.3 1504.8 421.9)" stroke-width="0.450"/>
<ellipse cx="1492.1" cy="434.3" rx="1.500" ry="2.300" transform="rotate(27.3 1492.1 434.3)"/>
<ellipse cx="1491.8" cy="434.1" rx="0.800" ry="1.400" transform="rotate(27.3 1492.1 434.3)" stroke-width="0.450"/>
<ellipse cx="1478.0" cy="438.8" rx="1.500" ry="2.300" transform="rotate(27.3 1478.0 438.8)"/>
<ellipse cx="1477.7" cy="438.6" rx="0.800" ry="1.400" transform="rotate(27.3 1478.0 438.8)" stroke-width="0.450"/>
<ellipse cx="1466.3" cy="434.1" rx="1.500" ry="2.300" transform="rotate(27.3 1466.3 434.1)"/>
<ellipse cx="1466.0" cy="433.9" rx="0.800" ry="1.400" transform="rotate(27.3 1466.3 434.1)" stroke-width="0.450"/>
<ellipse cx="1460.2" cy="421.5" rx="1.500" ry="2.300" transform="rotate(27.3 1460.2 421.5)"/>
<ellipse cx="1459.9" cy="421.3" rx="0.800" ry="1.400" transform="rotate(27.3 1460.2 421.5)" stroke-width="0.450"/>
<ellipse cx="1461.2" cy="404.3" rx="1.500" ry="2.300" transform="rotate(27.3 1461.2 404.3)"/>
<ellipse cx="1460.9" cy="404.1" rx="0.800" ry="1.400" transform="rotate(27.3 1461.2 404.3)" stroke-width="0.450"/>
<ellipse cx="1469.2" cy="387.2" rx="1.500" ry="2.300" transform="rotate(27.3 1469.2 387.2)"/>
<ellipse cx="1468.9" cy="387.0" rx="0.800" ry="1.400" transform="rotate(27.3 1469.2 387.2)" stroke-width="0.450"/>
<ellipse cx="1481.9" cy="374.7" rx="1.500" ry="2.300" transform="rotate(27.3 1481.9 374.7)"/>
<ellipse cx="1481.6" cy="374.5" rx="0.800" ry="1.400" transform="rotate(27.3 1481.9 374.7)" stroke-width="0.450"/>
<ellipse cx="1496.0" cy="370.2" rx="1.500" ry="2.300" transform="rotate(27.3 1496.0 370.2)"/>
<ellipse cx="1495.7" cy="370.0" rx="0.800" ry="1.400" transform="rotate(27.3 1496.0 370.2)" stroke-width="0.450"/>
<path d="M996.200 690.300L1070.400 733.600L1619.900 415.200L1545.500 372.300"/>
<path d="M918.2 727.3L926.5 731.7"/>
<path d="M1012.9 659.6L1020.9 664.1"/>
<path d="M1052.0 634.7L1060.0 639.2"/>
<path d="M1107.3 615.5L1115.6 620.0"/>
<path d="M1147.7 575.4L1155.7 579.5"/>
<path d="M1185.0 556.7L1193.0 560.8"/>
<path d="M1218.9 535.4L1226.9 539.8"/>
<path d="M1271.3 520.2L1279.6 524.6"/>
<path d="M1344.9 574.5L1353.0 578.7"/>
<path d="M1317.500 476.700L1325.200 481L1325.200 573.800"/>
<text x="927.6" y="738.8" font-family="Liberation Serif,serif" font-weight="bold" font-size="11.500" fill="#1a1a1a" stroke="none">5</text>
<text x="1023.2" y="672.2" font-family="Liberation Serif,serif" font-weight="bold" font-size="11.500" fill="#1a1a1a" stroke="none">4</text>
<text x="1061.6" y="647.2" font-family="Liberation Serif,serif" font-weight="bold" font-size="11.500" fill="#1a1a1a" stroke="none">3</text>
<text x="1117.2" y="627.6" font-family="Liberation Serif,serif" font-weight="bold" font-size="11.500" fill="#1a1a1a" stroke="none">2</text>
<text x="1158" y="587.2" font-family="Liberation Serif,serif" font-weight="bold" font-size="11.500" fill="#1a1a1a" stroke="none">7</text>
<text x="1194.6" y="568.4" font-family="Liberation Serif,serif" font-weight="bold" font-size="11.500" fill="#1a1a1a" stroke="none">6</text>
<text x="1229" y="547.6" font-family="Liberation Serif,serif" font-weight="bold" font-size="11.500" fill="#1a1a1a" stroke="none">7</text>
<text x="1281.2" y="532.2" font-family="Liberation Serif,serif" font-weight="bold" font-size="11.500" fill="#1a1a1a" stroke="none">2</text>
<text x="1355.6" y="585.4" font-family="Liberation Serif,serif" font-weight="bold" font-size="11.500" fill="#1a1a1a" stroke="none">1</text>
<text x="1333.500" y="490.0" text-anchor="middle" font-family="Liberation Serif,serif" font-weight="bold" font-size="10.500" fill="#1a1a1a" stroke="none">8</text>
<text x="1333.500" y="499.1" text-anchor="middle" font-family="Liberation Serif,serif" font-weight="bold" font-size="10.500" fill="#1a1a1a" stroke="none">9</text>
<text x="1333.500" y="508.2" text-anchor="middle" font-family="Liberation Serif,serif" font-weight="bold" font-size="10.500" fill="#1a1a1a" stroke="none">10</text>
<text x="1333.500" y="517.2" text-anchor="middle" font-family="Liberation Serif,serif" font-weight="bold" font-size="10.500" fill="#1a1a1a" stroke="none">11</text>
<text x="1333.500" y="526.3" text-anchor="middle" font-family="Liberation Serif,serif" font-weight="bold" font-size="10.500" fill="#1a1a1a" stroke="none">12</text>
<text x="1333.500" y="535.4" text-anchor="middle" font-family="Liberation Serif,serif" font-weight="bold" font-size="10.500" fill="#1a1a1a" stroke="none">13</text>
<text x="1333.500" y="544.5" text-anchor="middle" font-family="Liberation Serif,serif" font-weight="bold" font-size="10.500" fill="#1a1a1a" stroke="none">14</text>
<text x="1333.500" y="553.6" text-anchor="middle" font-family="Liberation Serif,serif" font-weight="bold" font-size="10.500" fill="#1a1a1a" stroke="none">15</text>
<text x="1333.500" y="562.6" text-anchor="middle" font-family="Liberation Serif,serif" font-weight="bold" font-size="10.500" fill="#1a1a1a" stroke="none">16</text>
<text x="1333.500" y="571.7" text-anchor="middle" font-family="Liberation Serif,serif" font-weight="bold" font-size="10.500" fill="#1a1a1a" stroke="none">17</text>
</svg>

<div class="abs" style="left:1877px;top:58px;width:21px;height:8px;background:#e4e4e4;border-bottom:1px solid #9c9c9c"></div>
<div class="abs" style="left:643px;top:900px;width:143px;height:20px;background:#e1e1e1"></div>
<div class="abs" style="left:807px;top:908px;width:538px;height:3px;background:#8a8a8a;border-radius:1.500px"></div>
<div class="abs" style="left:1886px;top:510px;width:3px;height:21px;background:#808080;border-radius:1.500px"></div>
<svg class="abs" style="left:621px;top:470px" width="22" height="40" viewBox="621 470 22 40"><path d="M636.100 481.200v13.400l-7.700-6.700z" fill="#6a6a6a"/></svg>
<svg class="abs" style="left:1898px;top:470px" width="22" height="40" viewBox="1898 470 22 40"><path d="M1913 481.200v13.400l-7.900-6.700z" fill="#6a6a6a"/></svg>

<div class="tx" style="left:75.30px;top:73.59px;font-size:17.5px;color:#444;">Bookmarks</div>
<div class="tx" style="left:546.70px;top:20.65px;font-size:14px;color:#505050;">524</div>
<div class="tx" style="left:588.80px;top:20.65px;font-size:14px;color:#222;transform:scaleX(1.3365);">/</div>
<div class="tx" style="left:603.00px;top:20.65px;font-size:14px;color:#222;transform:scaleX(1.0146);">954</div>
<div class="tx" style="left:908.30px;top:20.65px;font-size:14px;color:#505050;transform:scaleX(0.9810);">75%</div>
<div class="tx" style="left:669.00px;top:903.75px;font-size:14px;color:#333;transform:scaleX(1.0076);">11,69 x 8,27 in</div>
</body>
</html>
